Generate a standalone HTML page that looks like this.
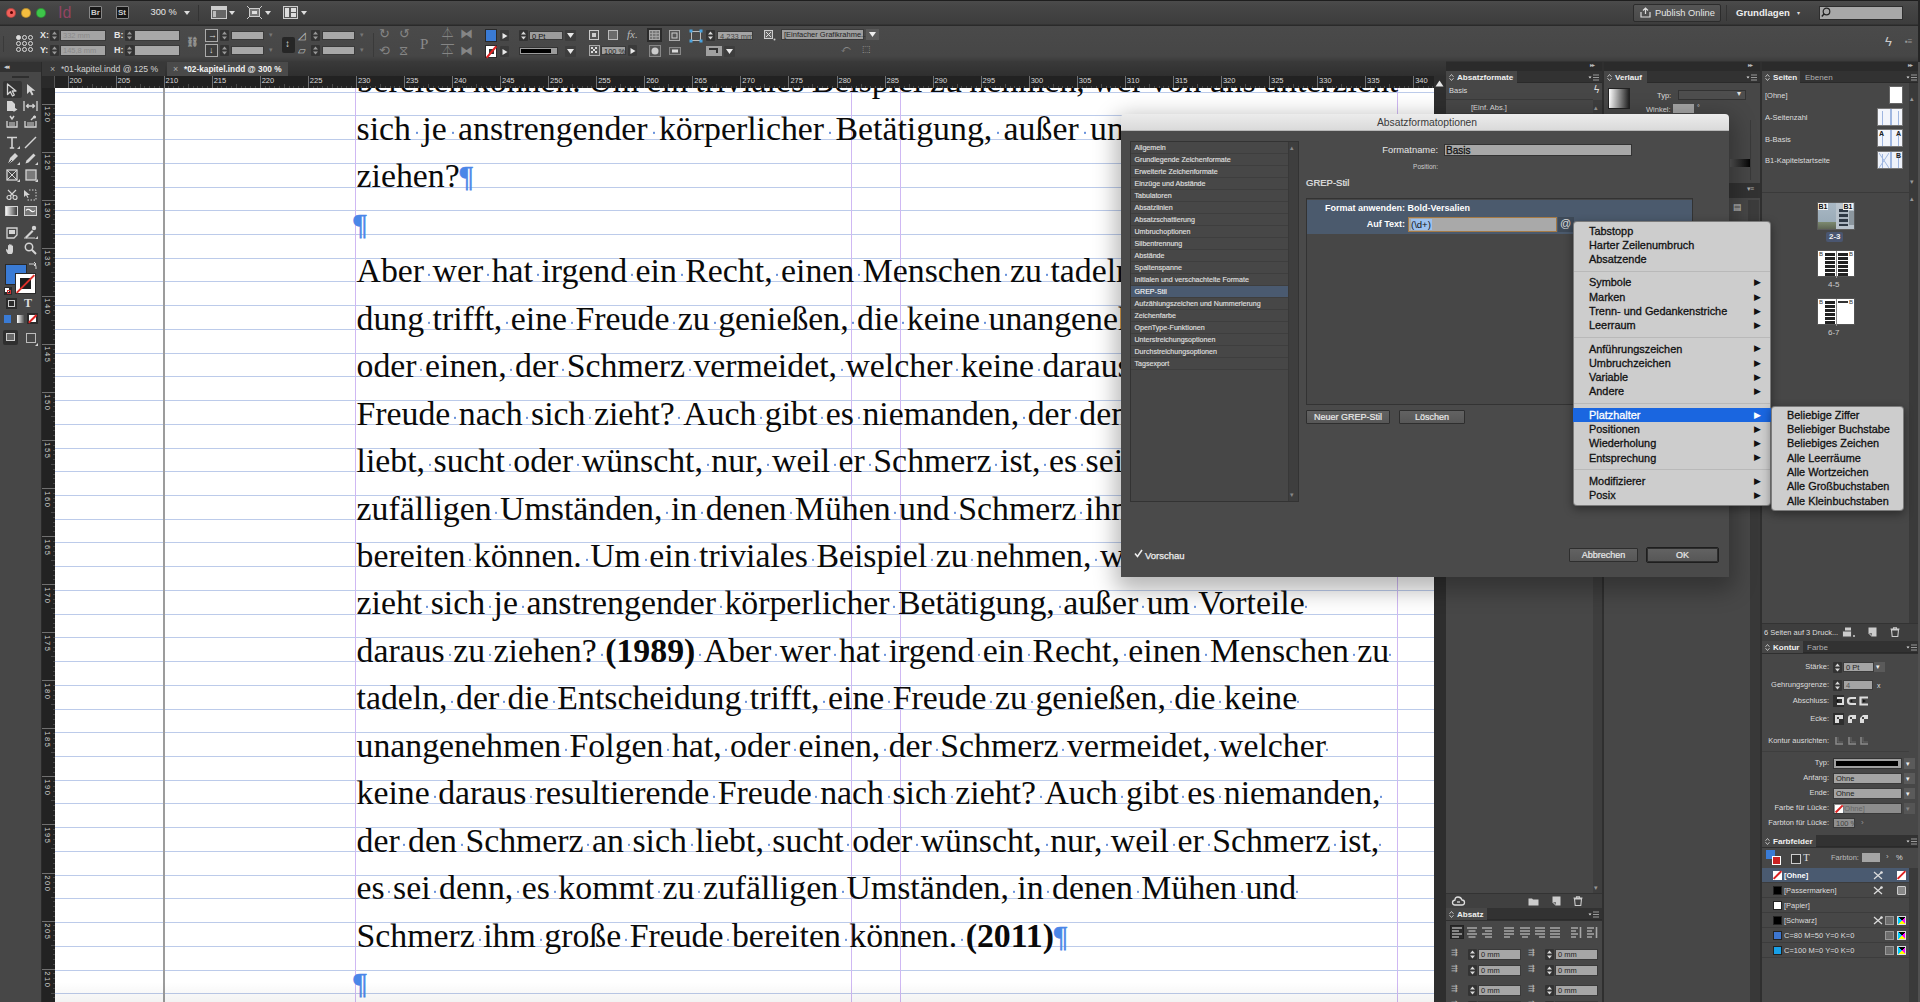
<!DOCTYPE html><html><head><meta charset="utf-8"><style>
*{margin:0;padding:0;box-sizing:border-box}
html,body{width:1920px;height:1002px;overflow:hidden;background:#474747;font-family:"Liberation Sans",sans-serif;color:#ddd;position:relative}
.a{position:absolute}
.t{position:absolute;white-space:nowrap;line-height:1}
i.sp{font-style:normal;position:relative}
.pil{color:#4a86e8;font-family:'Liberation Serif',serif;font-size:0.86em;-webkit-text-stroke:0.6px #4a86e8;position:relative;top:-0.02em}
i.sp:after{content:"";position:absolute;left:45%;top:0.66em;width:2px;height:2px;background:#6a93dc}
</style></head><body>
<div class="a" style="left:55px;top:88px;width:1379px;height:914px;background:#fff"></div><div class="a" style="left:55px;top:92px;width:1379px;height:1px;background:#bccbea"></div><div class="a" style="left:55px;top:115px;width:1379px;height:1px;background:#bccbea"></div><div class="a" style="left:55px;top:139px;width:1379px;height:1px;background:#bccbea"></div><div class="a" style="left:55px;top:163px;width:1379px;height:1px;background:#bccbea"></div><div class="a" style="left:55px;top:187px;width:1379px;height:1px;background:#bccbea"></div><div class="a" style="left:55px;top:210px;width:1379px;height:1px;background:#bccbea"></div><div class="a" style="left:55px;top:234px;width:1379px;height:1px;background:#bccbea"></div><div class="a" style="left:55px;top:258px;width:1379px;height:1px;background:#bccbea"></div><div class="a" style="left:55px;top:281px;width:1379px;height:1px;background:#bccbea"></div><div class="a" style="left:55px;top:305px;width:1379px;height:1px;background:#bccbea"></div><div class="a" style="left:55px;top:329px;width:1379px;height:1px;background:#bccbea"></div><div class="a" style="left:55px;top:353px;width:1379px;height:1px;background:#bccbea"></div><div class="a" style="left:55px;top:376px;width:1379px;height:1px;background:#bccbea"></div><div class="a" style="left:55px;top:400px;width:1379px;height:1px;background:#bccbea"></div><div class="a" style="left:55px;top:424px;width:1379px;height:1px;background:#bccbea"></div><div class="a" style="left:55px;top:448px;width:1379px;height:1px;background:#bccbea"></div><div class="a" style="left:55px;top:471px;width:1379px;height:1px;background:#bccbea"></div><div class="a" style="left:55px;top:495px;width:1379px;height:1px;background:#bccbea"></div><div class="a" style="left:55px;top:519px;width:1379px;height:1px;background:#bccbea"></div><div class="a" style="left:55px;top:542px;width:1379px;height:1px;background:#bccbea"></div><div class="a" style="left:55px;top:566px;width:1379px;height:1px;background:#bccbea"></div><div class="a" style="left:55px;top:590px;width:1379px;height:1px;background:#bccbea"></div><div class="a" style="left:55px;top:614px;width:1379px;height:1px;background:#bccbea"></div><div class="a" style="left:55px;top:637px;width:1379px;height:1px;background:#bccbea"></div><div class="a" style="left:55px;top:661px;width:1379px;height:1px;background:#bccbea"></div><div class="a" style="left:55px;top:685px;width:1379px;height:1px;background:#bccbea"></div><div class="a" style="left:55px;top:709px;width:1379px;height:1px;background:#bccbea"></div><div class="a" style="left:55px;top:732px;width:1379px;height:1px;background:#bccbea"></div><div class="a" style="left:55px;top:756px;width:1379px;height:1px;background:#bccbea"></div><div class="a" style="left:55px;top:780px;width:1379px;height:1px;background:#bccbea"></div><div class="a" style="left:55px;top:803px;width:1379px;height:1px;background:#bccbea"></div><div class="a" style="left:55px;top:827px;width:1379px;height:1px;background:#bccbea"></div><div class="a" style="left:55px;top:851px;width:1379px;height:1px;background:#bccbea"></div><div class="a" style="left:55px;top:875px;width:1379px;height:1px;background:#bccbea"></div><div class="a" style="left:55px;top:898px;width:1379px;height:1px;background:#bccbea"></div><div class="a" style="left:55px;top:922px;width:1379px;height:1px;background:#bccbea"></div><div class="a" style="left:55px;top:946px;width:1379px;height:1px;background:#bccbea"></div><div class="a" style="left:55px;top:970px;width:1379px;height:1px;background:#bccbea"></div><div class="a" style="left:55px;top:993px;width:1379px;height:1px;background:#bccbea"></div><div class="a" style="left:163.4px;top:88px;width:1.3px;height:914px;background:#9c9c9c"></div><div class="a" style="left:355.2px;top:88px;width:1.3px;height:914px;background:#cfb8f3"></div><div class="a" style="left:851.2px;top:88px;width:1.3px;height:914px;background:#cfb8f3"></div><div class="a" style="left:899.8px;top:88px;width:1.3px;height:914px;background:#cfb8f3"></div><div class="a" style="left:1396.7px;top:88px;width:1.3px;height:914px;background:#cfb8f3"></div><div class="t" style="left:356.5px;top:64.39px;font-family:'Liberation Serif', serif;font-size:33.8px;line-height:1;color:#0a0a0a;word-spacing:-0.95px;transform:scaleY(1.02);transform-origin:0 28.31px">bereiten<i class="sp"> </i>können.<i class="sp"> </i>Um<i class="sp"> </i>ein<i class="sp"> </i>triviales<i class="sp"> </i>Beispiel<i class="sp"> </i>zu<i class="sp"> </i>nehmen,<i class="sp"> </i>wer<i class="sp"> </i>von<i class="sp"> </i>uns<i class="sp"> </i>unterzieht<i class="sp"> </i></div><div class="t" style="left:356.5px;top:111.85px;font-family:'Liberation Serif', serif;font-size:33.8px;line-height:1;color:#0a0a0a;word-spacing:2.9px;transform:scaleY(1.02);transform-origin:0 28.31px">sich<i class="sp"> </i>je<i class="sp"> </i>anstrengender<i class="sp"> </i>körperlicher<i class="sp"> </i>Betätigung,<i class="sp"> </i>außer<i class="sp"> </i>um<i class="sp"> </i>Vorteile<i class="sp"> </i>daraus<i class="sp"> </i>zu<i class="sp"> </i></div><div class="t" style="left:356.5px;top:159.31px;font-family:'Liberation Serif', serif;font-size:33.8px;line-height:1;color:#0a0a0a;word-spacing:0px;transform:scaleY(1.02);transform-origin:0 28.31px">ziehen?<span class="pil">¶</span></div><div class="t" style="left:356.5px;top:206.77px;font-family:'Liberation Serif', serif;font-size:33.8px;line-height:1;color:#0a0a0a;word-spacing:0px;transform:scaleY(1.02);transform-origin:0 28.31px"><span class="pil" style="margin-left:-3px">¶</span></div><div class="t" style="left:356.5px;top:254.23px;font-family:'Liberation Serif', serif;font-size:33.8px;line-height:1;color:#0a0a0a;word-spacing:0px;transform:scaleY(1.02);transform-origin:0 28.31px">Aber<i class="sp"> </i>wer<i class="sp"> </i>hat<i class="sp"> </i>irgend<i class="sp"> </i>ein<i class="sp"> </i>Recht,<i class="sp"> </i>einen<i class="sp"> </i>Menschen<i class="sp"> </i>zu<i class="sp"> </i>tadeln,<i class="sp"> </i>der<i class="sp"> </i>die<i class="sp"> </i>Entschei-</div><div class="t" style="left:356.5px;top:301.69px;font-family:'Liberation Serif', serif;font-size:33.8px;line-height:1;color:#0a0a0a;word-spacing:0px;transform:scaleY(1.02);transform-origin:0 28.31px">dung<i class="sp"> </i>trifft,<i class="sp"> </i>eine<i class="sp"> </i>Freude<i class="sp"> </i>zu<i class="sp"> </i>genießen,<i class="sp"> </i>die<i class="sp"> </i>keine<i class="sp"> </i>unangenehmen<i class="sp"> </i>Folgen<i class="sp"> </i>hat,<i class="sp"> </i></div><div class="t" style="left:356.5px;top:349.15px;font-family:'Liberation Serif', serif;font-size:33.8px;line-height:1;color:#0a0a0a;word-spacing:0px;transform:scaleY(1.02);transform-origin:0 28.31px">oder<i class="sp"> </i>einen,<i class="sp"> </i>der<i class="sp"> </i>Schmerz<i class="sp"> </i>vermeidet,<i class="sp"> </i>welcher<i class="sp"> </i>keine<i class="sp"> </i>daraus<i class="sp"> </i>resultierende<i class="sp"> </i></div><div class="t" style="left:356.5px;top:396.61px;font-family:'Liberation Serif', serif;font-size:33.8px;line-height:1;color:#0a0a0a;word-spacing:0px;transform:scaleY(1.02);transform-origin:0 28.31px">Freude<i class="sp"> </i>nach<i class="sp"> </i>sich<i class="sp"> </i>zieht?<i class="sp"> </i>Auch<i class="sp"> </i>gibt<i class="sp"> </i>es<i class="sp"> </i>niemanden,<i class="sp"> </i>der<i class="sp"> </i>den<i class="sp"> </i>Schmerz<i class="sp"> </i>an<i class="sp"> </i>sich<i class="sp"> </i></div><div class="t" style="left:356.5px;top:444.07px;font-family:'Liberation Serif', serif;font-size:33.8px;line-height:1;color:#0a0a0a;word-spacing:0px;transform:scaleY(1.02);transform-origin:0 28.31px">liebt,<i class="sp"> </i>sucht<i class="sp"> </i>oder<i class="sp"> </i>wünscht,<i class="sp"> </i>nur,<i class="sp"> </i>weil<i class="sp"> </i>er<i class="sp"> </i>Schmerz<i class="sp"> </i>ist,<i class="sp"> </i>es<i class="sp"> </i>sei<i class="sp"> </i>denn,<i class="sp"> </i>es<i class="sp"> </i>kommt<i class="sp"> </i>zu<i class="sp"> </i></div><div class="t" style="left:356.5px;top:491.53px;font-family:'Liberation Serif', serif;font-size:33.8px;line-height:1;color:#0a0a0a;word-spacing:0px;transform:scaleY(1.02);transform-origin:0 28.31px">zufälligen<i class="sp"> </i>Umständen,<i class="sp"> </i>in<i class="sp"> </i>denen<i class="sp"> </i>Mühen<i class="sp"> </i>und<i class="sp"> </i>Schmerz<i class="sp"> </i>ihm<i class="sp"> </i>große<i class="sp"> </i>Freude<i class="sp"> </i></div><div class="t" style="left:356.5px;top:538.99px;font-family:'Liberation Serif', serif;font-size:33.8px;line-height:1;color:#0a0a0a;word-spacing:0px;transform:scaleY(1.02);transform-origin:0 28.31px">bereiten<i class="sp"> </i>können.<i class="sp"> </i>Um<i class="sp"> </i>ein<i class="sp"> </i>triviales<i class="sp"> </i>Beispiel<i class="sp"> </i>zu<i class="sp"> </i>nehmen,<i class="sp"> </i>wer<i class="sp"> </i>von<i class="sp"> </i>uns<i class="sp"> </i>unter-</div><div class="t" style="left:356.5px;top:586.45px;font-family:'Liberation Serif', serif;font-size:33.8px;line-height:1;color:#0a0a0a;word-spacing:0px;transform:scaleY(1.02);transform-origin:0 28.31px">zieht<i class="sp"> </i>sich<i class="sp"> </i>je<i class="sp"> </i>anstrengender<i class="sp"> </i>körperlicher<i class="sp"> </i>Betätigung,<i class="sp"> </i>außer<i class="sp"> </i>um<i class="sp"> </i>Vorteile<i class="sp"> </i></div><div class="t" style="left:356.5px;top:633.91px;font-family:'Liberation Serif', serif;font-size:33.8px;line-height:1;color:#0a0a0a;word-spacing:0px;transform:scaleY(1.02);transform-origin:0 28.31px">daraus<i class="sp"> </i>zu<i class="sp"> </i>ziehen?<i class="sp"> </i><b>(1989)</b><i class="sp"> </i>Aber<i class="sp"> </i>wer<i class="sp"> </i>hat<i class="sp"> </i>irgend<i class="sp"> </i>ein<i class="sp"> </i>Recht,<i class="sp"> </i>einen<i class="sp"> </i>Menschen<i class="sp"> </i>zu<i class="sp"> </i></div><div class="t" style="left:356.5px;top:681.37px;font-family:'Liberation Serif', serif;font-size:33.8px;line-height:1;color:#0a0a0a;word-spacing:0px;transform:scaleY(1.02);transform-origin:0 28.31px">tadeln,<i class="sp"> </i>der<i class="sp"> </i>die<i class="sp"> </i>Entscheidung<i class="sp"> </i>trifft,<i class="sp"> </i>eine<i class="sp"> </i>Freude<i class="sp"> </i>zu<i class="sp"> </i>genießen,<i class="sp"> </i>die<i class="sp"> </i>keine<i class="sp"> </i></div><div class="t" style="left:356.5px;top:728.83px;font-family:'Liberation Serif', serif;font-size:33.8px;line-height:1;color:#0a0a0a;word-spacing:0px;transform:scaleY(1.02);transform-origin:0 28.31px">unangenehmen<i class="sp"> </i>Folgen<i class="sp"> </i>hat,<i class="sp"> </i>oder<i class="sp"> </i>einen,<i class="sp"> </i>der<i class="sp"> </i>Schmerz<i class="sp"> </i>vermeidet,<i class="sp"> </i>welcher<i class="sp"> </i></div><div class="t" style="left:356.5px;top:776.29px;font-family:'Liberation Serif', serif;font-size:33.8px;line-height:1;color:#0a0a0a;word-spacing:0px;transform:scaleY(1.02);transform-origin:0 28.31px">keine<i class="sp"> </i>daraus<i class="sp"> </i>resultierende<i class="sp"> </i>Freude<i class="sp"> </i>nach<i class="sp"> </i>sich<i class="sp"> </i>zieht?<i class="sp"> </i>Auch<i class="sp"> </i>gibt<i class="sp"> </i>es<i class="sp"> </i>niemanden,<i class="sp"> </i></div><div class="t" style="left:356.5px;top:823.75px;font-family:'Liberation Serif', serif;font-size:33.8px;line-height:1;color:#0a0a0a;word-spacing:0px;transform:scaleY(1.02);transform-origin:0 28.31px">der<i class="sp"> </i>den<i class="sp"> </i>Schmerz<i class="sp"> </i>an<i class="sp"> </i>sich<i class="sp"> </i>liebt,<i class="sp"> </i>sucht<i class="sp"> </i>oder<i class="sp"> </i>wünscht,<i class="sp"> </i>nur,<i class="sp"> </i>weil<i class="sp"> </i>er<i class="sp"> </i>Schmerz<i class="sp"> </i>ist,<i class="sp"> </i></div><div class="t" style="left:356.5px;top:871.21px;font-family:'Liberation Serif', serif;font-size:33.8px;line-height:1;color:#0a0a0a;word-spacing:0px;transform:scaleY(1.02);transform-origin:0 28.31px">es<i class="sp"> </i>sei<i class="sp"> </i>denn,<i class="sp"> </i>es<i class="sp"> </i>kommt<i class="sp"> </i>zu<i class="sp"> </i>zufälligen<i class="sp"> </i>Umständen,<i class="sp"> </i>in<i class="sp"> </i>denen<i class="sp"> </i>Mühen<i class="sp"> </i>und<i class="sp"> </i></div><div class="t" style="left:356.5px;top:918.67px;font-family:'Liberation Serif', serif;font-size:33.8px;line-height:1;color:#0a0a0a;word-spacing:0px;transform:scaleY(1.02);transform-origin:0 28.31px">Schmerz<i class="sp"> </i>ihm<i class="sp"> </i>große<i class="sp"> </i>Freude<i class="sp"> </i>bereiten<i class="sp"> </i>können.<i class="sp"> </i><b>(2011)</b><span class="pil">¶</span></div><div class="t" style="left:356.5px;top:966.13px;font-family:'Liberation Serif', serif;font-size:33.8px;line-height:1;color:#0a0a0a;word-spacing:0px;transform:scaleY(1.02);transform-origin:0 28.31px"><span class="pil" style="margin-left:-3px">¶</span></div><div class="a" style="left:55px;top:982px;width:1379px;height:20px;background:linear-gradient(rgba(0,0,0,0),rgba(0,0,0,.05))"></div><div class="a" style="left:0px;top:0px;width:1920px;height:26px;background:linear-gradient(#1e1e1e 0,#1e1e1e 1px,#4b4b4b 1px,#464646 6px,#3d3d3d 24px,#2a2a2a 25px,#2a2a2a 26px)"></div><div class="a" style="left:6px;top:8px;width:10px;height:10px;border-radius:50%;background:#f2605a;border:1px solid rgba(0,0,0,.25)"></div><div class="a" style="left:21px;top:8px;width:10px;height:10px;border-radius:50%;background:#f4bd3f;border:1px solid rgba(0,0,0,.25)"></div><div class="a" style="left:36px;top:8px;width:10px;height:10px;border-radius:50%;background:#3ec64a;border:1px solid rgba(0,0,0,.25)"></div><div class="a" style="left:10px;top:11px;width:3px;height:3px;border-radius:50%;background:#5a0000"></div><div class="t" style="left:58px;top:4.5px;font-family:'Liberation Sans', sans-serif;font-size:16px;color:#a04568;opacity:.85">Id</div><div class="a" style="left:89px;top:6px;width:13px;height:13px;background:#161616;border:1px solid #888;border-radius:1px"><div class="t" style="left:1px;top:2px;font-size:8px;font-weight:bold;color:#ccc">Br</div></div><div class="a" style="left:116px;top:6px;width:13px;height:13px;background:#161616;border:1px solid #888;border-radius:1px"><div class="t" style="left:1px;top:2px;font-size:8px;font-weight:bold;color:#ccc">St</div></div><div class="t" style="left:150.5px;top:8px;font-size:9.3px;color:#e6e6e6">300 %</div><svg class="a" style="left:184px;top:11px;overflow:visible" width="6" height="4" viewBox="0 0 6 4"><path d="M0 0H6L3 4Z" fill="#ddd"/></svg><div class="a" style="left:198px;top:5px;width:1px;height:16px;background:#333"></div><svg class="a" style="left:211px;top:6px;overflow:visible" width="16" height="13" viewBox="0 0 16 13"><rect x="0.5" y="0.5" width="15" height="12" fill="#666" stroke="#ccc"/><rect x="1" y="1" width="14" height="3" fill="#ccc"/><rect x="2" y="5" width="3" height="6" fill="#bbb"/></svg><svg class="a" style="left:247px;top:6px;overflow:visible" width="15" height="13" viewBox="0 0 15 13"><rect x="2.5" y="2.5" width="10" height="8" fill="#777" stroke="#ccc"/><path d="M0 0L3 3M15 0L12 3M0 13L3 10M15 13L12 10" stroke="#ccc"/><rect x="5" y="5" width="5" height="3" fill="#ddd"/></svg><svg class="a" style="left:283px;top:6px;overflow:visible" width="15" height="13" viewBox="0 0 15 13"><rect x="0.5" y="0.5" width="14" height="12" fill="#555" stroke="#ccc"/><rect x="2" y="2" width="4" height="9" fill="#ddd"/><rect x="8" y="2" width="5" height="4" fill="#ddd"/><rect x="8" y="7" width="5" height="4" fill="#ddd"/></svg><svg class="a" style="left:229px;top:11px;overflow:visible" width="6" height="4" viewBox="0 0 6 4"><path d="M0 0H6L3 4Z" fill="#ddd"/></svg><svg class="a" style="left:265px;top:11px;overflow:visible" width="6" height="4" viewBox="0 0 6 4"><path d="M0 0H6L3 4Z" fill="#ddd"/></svg><svg class="a" style="left:301px;top:11px;overflow:visible" width="6" height="4" viewBox="0 0 6 4"><path d="M0 0H6L3 4Z" fill="#ddd"/></svg><div class="a" style="left:1633px;top:4px;width:88px;height:18px;border:1px solid #2c2c2c;background:linear-gradient(#555,#4a4a4a);border-radius:2px"></div><svg class="a" style="left:1640px;top:7px;overflow:visible" width="11" height="11" viewBox="0 0 11 11"><path d="M1 5V10H10V5M5.5 1V7M3 3.5L5.5 1L8 3.5" fill="none" stroke="#ddd" stroke-width="1.2"/></svg><div class="t" style="left:1655px;top:8.5px;font-size:9.3px;color:#e6e6e6">Publish Online</div><div class="a" style="left:1726px;top:5px;width:1px;height:16px;background:#333"></div><div class="t" style="left:1736px;top:8px;font-size:9.6px;color:#eee;font-weight:bold">Grundlagen</div><div class="t" style="left:1797px;top:10px;font-size:6px;color:#ddd">▾</div><div class="a" style="left:1819px;top:6px;width:84px;height:14px;background:#a8a8a8;border:1px solid #2e2e2e"></div><svg class="a" style="left:1821px;top:7px;overflow:visible" width="10" height="11" viewBox="0 0 10 11"><circle cx="5.5" cy="4.5" r="3.3" fill="none" stroke="#222" stroke-width="1.2"/><path d="M3.2 6.8L0.8 9.5" stroke="#222" stroke-width="1.4"/></svg><div class="a" style="left:0px;top:26px;width:1920px;height:36px;background:linear-gradient(#4a4a4a,#464646 30px,#3c3c3c 35px,#2a2a2a 36px)"></div><div class="a" style="left:3px;top:36px;width:1px;height:16px;background:#3a3a3a"></div><div class="a" style="left:16px;top:35px;width:5px;height:5px;border:1px solid #ddd;border-radius:50%;background:#ddd"></div><div class="a" style="left:22px;top:35px;width:5px;height:5px;border:1px solid #ddd;border-radius:50%"></div><div class="a" style="left:28px;top:35px;width:5px;height:5px;border:1px solid #ddd;border-radius:50%"></div><div class="a" style="left:16px;top:41px;width:5px;height:5px;border:1px solid #ddd;border-radius:50%"></div><div class="a" style="left:22px;top:41px;width:5px;height:5px;border:1px solid #ddd;border-radius:50%"></div><div class="a" style="left:28px;top:41px;width:5px;height:5px;border:1px solid #ddd;border-radius:50%"></div><div class="a" style="left:16px;top:47px;width:5px;height:5px;border:1px solid #ddd;border-radius:50%"></div><div class="a" style="left:22px;top:47px;width:5px;height:5px;border:1px solid #ddd;border-radius:50%"></div><div class="a" style="left:28px;top:47px;width:5px;height:5px;border:1px solid #ddd;border-radius:50%"></div><div class="t" style="left:40px;top:31px;font-size:9px;color:#e6e6e6;font-weight:bold">X:</div><div class="t" style="left:40px;top:46px;font-size:9px;color:#e6e6e6;font-weight:bold">Y:</div><div class="t" style="left:114px;top:31px;font-size:9px;color:#e6e6e6;font-weight:bold">B:</div><div class="t" style="left:114px;top:46px;font-size:9px;color:#e6e6e6;font-weight:bold">H:</div><div class="a" style="left:50px;top:30px;width:9px;height:11px;background:#333;border-radius:1px"><svg class="a" style="left:1px;top:1px" width="7" height="9"><path d="M1 3.5L3.5 0.5L6 3.5ZM1 5.5L3.5 8.5L6 5.5Z" fill="#999"/></svg></div><div class="a" style="left:60px;top:30px;width:46px;height:11px;background:#a4a4a4;border:1px solid #3a3a3a"><div class="t" style="left:2px;top:1px;font-size:7.5px;color:#8a8a8a">332 mm</div></div><div class="a" style="left:50px;top:45px;width:9px;height:11px;background:#333;border-radius:1px"><svg class="a" style="left:1px;top:1px" width="7" height="9"><path d="M1 3.5L3.5 0.5L6 3.5ZM1 5.5L3.5 8.5L6 5.5Z" fill="#999"/></svg></div><div class="a" style="left:60px;top:45px;width:46px;height:11px;background:#a4a4a4;border:1px solid #3a3a3a"><div class="t" style="left:2px;top:1px;font-size:7.5px;color:#8a8a8a">145,8 mm</div></div><div class="a" style="left:125px;top:30px;width:9px;height:11px;background:#333;border-radius:1px"><svg class="a" style="left:1px;top:1px" width="7" height="9"><path d="M1 3.5L3.5 0.5L6 3.5ZM1 5.5L3.5 8.5L6 5.5Z" fill="#999"/></svg></div><div class="a" style="left:134px;top:30px;width:46px;height:11px;background:#a8a8a8;border:1px solid #3a3a3a"></div><div class="a" style="left:125px;top:45px;width:9px;height:11px;background:#333;border-radius:1px"><svg class="a" style="left:1px;top:1px" width="7" height="9"><path d="M1 3.5L3.5 0.5L6 3.5ZM1 5.5L3.5 8.5L6 5.5Z" fill="#999"/></svg></div><div class="a" style="left:134px;top:45px;width:46px;height:11px;background:#a8a8a8;border:1px solid #3a3a3a"></div><div class="t" style="left:186px;top:37px;font-size:10px;color:#ccc">⛓</div><div class="a" style="left:205px;top:29px;width:13px;height:13px;border:1px solid #aaa;background:#3d3d3d"><div class="t" style="left:2px;top:1px;font-size:9px;color:#ddd">→</div></div><div class="a" style="left:205px;top:44px;width:13px;height:13px;border:1px solid #aaa;background:#3d3d3d"><div class="t" style="left:3px;top:1px;font-size:9px;color:#ddd">↓</div></div><div class="a" style="left:220px;top:30px;width:9px;height:11px;background:#333;border-radius:1px"><svg class="a" style="left:1px;top:1px" width="7" height="9"><path d="M1 3.5L3.5 0.5L6 3.5ZM1 5.5L3.5 8.5L6 5.5Z" fill="#999"/></svg></div><div class="a" style="left:231px;top:31px;width:33px;height:9px;background:#a8a8a8;border:1px solid #3a3a3a"></div><div class="t" style="left:269px;top:31px;font-size:7px;color:#777">▾</div><div class="a" style="left:220px;top:45px;width:9px;height:11px;background:#333;border-radius:1px"><svg class="a" style="left:1px;top:1px" width="7" height="9"><path d="M1 3.5L3.5 0.5L6 3.5ZM1 5.5L3.5 8.5L6 5.5Z" fill="#999"/></svg></div><div class="a" style="left:231px;top:46px;width:33px;height:9px;background:#a8a8a8;border:1px solid #3a3a3a"></div><div class="t" style="left:269px;top:46px;font-size:7px;color:#777">▾</div><div class="a" style="left:282px;top:37px;width:13px;height:16px;background:#262626;border-radius:2px"><div class="t" style="left:3px;top:2px;font-size:10px;color:#ddd">↕</div></div><div class="t" style="left:298px;top:31px;font-size:10px;color:#ccc">◿</div><div class="t" style="left:298px;top:46px;font-size:10px;color:#ccc">▱</div><div class="a" style="left:311px;top:30px;width:9px;height:11px;background:#333;border-radius:1px"><svg class="a" style="left:1px;top:1px" width="7" height="9"><path d="M1 3.5L3.5 0.5L6 3.5ZM1 5.5L3.5 8.5L6 5.5Z" fill="#999"/></svg></div><div class="a" style="left:322px;top:31px;width:33px;height:9px;background:#a8a8a8;border:1px solid #3a3a3a"></div><div class="t" style="left:360px;top:31px;font-size:7px;color:#777">▾</div><div class="a" style="left:311px;top:45px;width:9px;height:11px;background:#333;border-radius:1px"><svg class="a" style="left:1px;top:1px" width="7" height="9"><path d="M1 3.5L3.5 0.5L6 3.5ZM1 5.5L3.5 8.5L6 5.5Z" fill="#999"/></svg></div><div class="a" style="left:322px;top:46px;width:33px;height:9px;background:#a8a8a8;border:1px solid #3a3a3a"></div><div class="t" style="left:360px;top:46px;font-size:7px;color:#777">▾</div><div class="a" style="left:373px;top:33px;width:1px;height:24px;background:#3a3a3a"></div><div class="t" style="left:379px;top:27px;font-size:13px;color:#858585">↻</div><div class="t" style="left:399px;top:27px;font-size:13px;color:#858585">↺</div><div class="t" style="left:379px;top:44px;font-size:13px;color:#858585">⟲</div><div class="t" style="left:399px;top:44px;font-size:13px;color:#858585">⧖</div><div class="t" style="left:441px;top:27px;font-size:13px;color:#858585">⏃</div><div class="t" style="left:460px;top:27px;font-size:13px;color:#858585">⧓</div><div class="t" style="left:441px;top:44px;font-size:13px;color:#858585">⏄</div><div class="t" style="left:460px;top:44px;font-size:13px;color:#858585">⧓</div><div class="t" style="left:420px;top:37px;font-size:15px;color:#8a8a8a;font-family:'Liberation Serif', serif">P</div><div class="a" style="left:485px;top:29px;width:12px;height:13px;background:#3a7bd5;border:1px solid #2a2a2a"></div><div class="a" style="left:485px;top:45px;width:12px;height:13px;background:#fff;border:1px solid #2a2a2a"><div class="a" style="left:3px;top:3px;width:5px;height:5px;background:#333"></div><div class="a" style="left:-2px;top:5px;width:15px;height:2px;background:#d22;transform:rotate(-50deg)"></div></div><div class="a" style="left:500px;top:30px;width:9px;height:11px;background:#3a3a3a;border-radius:1px"><svg class="a" style="left:2px;top:2.5px" width="6" height="6"><path d="M0.5 0L5.5 3L0.5 6Z" fill="#e8e8e8"/></svg></div><div class="a" style="left:500px;top:46px;width:9px;height:11px;background:#3a3a3a;border-radius:1px"><svg class="a" style="left:2px;top:2.5px" width="6" height="6"><path d="M0.5 0L5.5 3L0.5 6Z" fill="#e8e8e8"/></svg></div><div class="a" style="left:519px;top:30px;width:9px;height:11px;background:#333;border-radius:1px"><svg class="a" style="left:1px;top:1px" width="7" height="9"><path d="M1 3.5L3.5 0.5L6 3.5ZM1 5.5L3.5 8.5L6 5.5Z" fill="#d8d8d8"/></svg></div><div class="a" style="left:529px;top:31px;width:34px;height:9px;background:#9c9c9c;border:1px solid #3a3a3a"><div class="t" style="left:2px;top:1px;font-size:7.5px;color:#111">0 Pt</div></div><div class="a" style="left:565px;top:30px;width:11px;height:11px;background:#3d3d3d;border-radius:1px"><svg class="a" style="left:2px;top:3px" width="7" height="5"><path d="M0 0H7L3.5 5Z" fill="#e8e8e8"/></svg></div><div class="a" style="left:519px;top:47px;width:39px;height:8px;background:#9c9c9c;border:1px solid #333"><div class="a" style="left:1px;top:1px;width:30px;height:4px;background:#000"></div></div><div class="a" style="left:565px;top:46px;width:11px;height:11px;background:#3d3d3d;border-radius:1px"><svg class="a" style="left:2px;top:3px" width="7" height="5"><path d="M0 0H7L3.5 5Z" fill="#e8e8e8"/></svg></div><svg class="a" style="left:589px;top:30px;overflow:visible" width="11" height="11" viewBox="0 0 11 11"><rect x="0.5" y="0.5" width="9" height="9" fill="#555" stroke="#ccc"/><rect x="3" y="3" width="4" height="4" fill="#ccc"/></svg><svg class="a" style="left:608px;top:30px;overflow:visible" width="11" height="11" viewBox="0 0 11 11"><rect x="0.5" y="0.5" width="9" height="9" fill="#6a6a6a" stroke="#bbb"/></svg><div class="t" style="left:627px;top:29px;font-size:11px;color:#bbb;font-style:italic;font-family:'Liberation Serif', serif">fx.</div><div class="a" style="left:647px;top:28px;width:15px;height:14px;background:#2b2b2b"><svg class="a" style="left:2px;top:2px" width="11" height="10"><rect x="0.5" y="0.5" width="10" height="9" fill="#777" stroke="#aaa"/><path d="M0 3.5H11M0 6.5H11M3.5 0V10M7 0V10" stroke="#aaa" stroke-width="0.8"/></svg></div><svg class="a" style="left:669px;top:30px;overflow:visible" width="11" height="11" viewBox="0 0 11 11"><rect x="0.5" y="0.5" width="10" height="10" fill="#555" stroke="#aaa"/><rect x="3" y="3" width="5" height="5" fill="none" stroke="#ccc"/></svg><svg class="a" style="left:589px;top:45px;overflow:visible" width="11" height="11" viewBox="0 0 11 11"><rect x="0.5" y="0.5" width="10" height="10" fill="#555" stroke="#aaa"/><path d="M2 2H4V4H2ZM6 2H8V4H6ZM4 4H6V6H4ZM2 6H4V8H2ZM6 6H8V8H6Z" fill="#ddd"/></svg><div class="a" style="left:601px;top:46px;width:25px;height:9px;background:#a0a0a0;border:1px solid #3a3a3a"><div class="t" style="left:2px;top:1px;font-size:7.5px;color:#222">100 %</div></div><div class="a" style="left:628px;top:45px;width:9px;height:11px;background:#3a3a3a;border-radius:1px"><svg class="a" style="left:2px;top:2.5px" width="6" height="6"><path d="M0.5 0L5.5 3L0.5 6Z" fill="#e8e8e8"/></svg></div><svg class="a" style="left:649px;top:45px;overflow:visible" width="12" height="12" viewBox="0 0 12 12"><rect x="0.5" y="0.5" width="11" height="11" fill="#555" stroke="#888"/><circle cx="6" cy="6" r="3.5" fill="#ccc"/></svg><svg class="a" style="left:669px;top:45px;overflow:visible" width="12" height="12" viewBox="0 0 12 12"><rect x="0.5" y="2.5" width="11" height="7" fill="#555" stroke="#888"/><rect x="3" y="4.5" width="6" height="3" fill="#ddd"/></svg><svg class="a" style="left:689px;top:29px;overflow:visible" width="14" height="14" viewBox="0 0 14 14"><rect x="2.5" y="2.5" width="9" height="9" fill="none" stroke="#bbb"/><rect x="0.5" y="0.5" width="3" height="3" fill="#4aa3df"/><rect x="10.5" y="0.5" width="3" height="3" fill="#4aa3df"/><rect x="0.5" y="10.5" width="3" height="3" fill="#4aa3df"/><rect x="10.5" y="10.5" width="3" height="3" fill="#4aa3df"/></svg><div class="a" style="left:706px;top:30px;width:9px;height:11px;background:#333;border-radius:1px"><svg class="a" style="left:1px;top:1px" width="7" height="9"><path d="M1 3.5L3.5 0.5L6 3.5ZM1 5.5L3.5 8.5L6 5.5Z" fill="#d8d8d8"/></svg></div><div class="a" style="left:717px;top:31px;width:36px;height:9px;background:#a4a4a4;border:1px solid #3a3a3a"><div class="t" style="left:2px;top:1px;font-size:7.5px;color:#444">4,233 mm</div></div><div class="a" style="left:706px;top:46px;width:16px;height:10px;background:#a0a0a0"><div class="a" style="left:3px;top:2px;width:9px;height:5px;border-top:2px solid #333;border-right:2px solid #333"></div></div><div class="a" style="left:724px;top:46px;width:11px;height:11px;background:#3d3d3d;border-radius:1px"><svg class="a" style="left:2px;top:3px" width="7" height="5"><path d="M0 0H7L3.5 5Z" fill="#e8e8e8"/></svg></div><svg class="a" style="left:763px;top:29px;overflow:visible" width="13" height="12" viewBox="0 0 13 12"><rect x="1.5" y="1.5" width="8" height="8" fill="#666" stroke="#ccc"/><path d="M3 3L8 8M8 3L3 8" stroke="#ddd"/><circle cx="11.5" cy="10.5" r="1" fill="#ccc"/></svg><div class="a" style="left:781px;top:29px;width:83px;height:11px;background:#9e9e9e;border:1px solid #3a3a3a"><div class="t" style="left:2px;top:1px;font-size:7.5px;color:#222">[Einfacher Grafikrahme...</div></div><div class="a" style="left:866px;top:29px;width:13px;height:11px;background:#5a5a5a"><svg class="a" style="left:3px;top:3px" width="7" height="5"><path d="M0 0H7L3.5 5Z" fill="#eee"/></svg></div><div class="t" style="left:841px;top:45px;font-size:9px;color:#888">⤺</div><div class="t" style="left:862px;top:45px;font-size:9px;color:#aaa">⬚</div><div class="t" style="left:1885px;top:35px;font-size:13px;color:#ccc">ϟ</div><div class="t" style="left:1905px;top:38px;font-size:8px;color:#999">▪≡</div><div class="a" style="left:0px;top:61px;width:1446px;height:15px;background:linear-gradient(#3a3a3a,#2f2f2f)"></div><div class="a" style="left:0px;top:62px;width:42px;height:10px;background:#323232"></div><div class="t" style="left:4px;top:63px;font-size:7px;color:#ccc;letter-spacing:-2px">◂◂</div><div class="a" style="left:42px;top:62px;width:123px;height:14px;background:#383838"></div><div class="t" style="left:50px;top:65px;font-size:9px;color:#aaa">×</div><div class="t" style="left:61px;top:65px;font-size:8.6px;color:#d2d2d2">*01-kapitel.indd @ 125 %</div><div class="a" style="left:167px;top:62px;width:121px;height:14px;background:#4a4a4a"></div><div class="t" style="left:173px;top:65px;font-size:9px;color:#aaa">×</div><div class="t" style="left:184px;top:65px;font-size:8.3px;color:#f2f2f2;font-weight:bold">*02-kapitel.indd @ 300 %</div><div class="a" style="left:42px;top:76px;width:1392px;height:12px;background:#222"></div><div class="a" style="left:42px;top:76px;width:13px;height:12px;background:#2a2a2a;border-right:1px solid #555"></div><div class="a" style="left:67.5px;top:76px;width:1px;height:12px;background:#707070"></div><div class="a" style="left:72.3px;top:86px;width:1px;height:2px;background:#4a4a4a"></div><div class="a" style="left:77.1px;top:86px;width:1px;height:2px;background:#4a4a4a"></div><div class="a" style="left:81.9px;top:86px;width:1px;height:2px;background:#4a4a4a"></div><div class="a" style="left:86.7px;top:86px;width:1px;height:2px;background:#4a4a4a"></div><div class="a" style="left:91.5px;top:84px;width:1px;height:4px;background:#4a4a4a"></div><div class="a" style="left:96.3px;top:86px;width:1px;height:2px;background:#4a4a4a"></div><div class="a" style="left:101.1px;top:86px;width:1px;height:2px;background:#4a4a4a"></div><div class="a" style="left:105.9px;top:86px;width:1px;height:2px;background:#4a4a4a"></div><div class="a" style="left:110.8px;top:86px;width:1px;height:2px;background:#4a4a4a"></div><div class="t" style="left:69.5px;top:77px;font-size:7.5px;color:#d8d8d8">200</div><div class="a" style="left:115.6px;top:76px;width:1px;height:12px;background:#707070"></div><div class="a" style="left:120.4px;top:86px;width:1px;height:2px;background:#4a4a4a"></div><div class="a" style="left:125.2px;top:86px;width:1px;height:2px;background:#4a4a4a"></div><div class="a" style="left:130.0px;top:86px;width:1px;height:2px;background:#4a4a4a"></div><div class="a" style="left:134.8px;top:86px;width:1px;height:2px;background:#4a4a4a"></div><div class="a" style="left:139.6px;top:84px;width:1px;height:4px;background:#4a4a4a"></div><div class="a" style="left:144.4px;top:86px;width:1px;height:2px;background:#4a4a4a"></div><div class="a" style="left:149.2px;top:86px;width:1px;height:2px;background:#4a4a4a"></div><div class="a" style="left:154.0px;top:86px;width:1px;height:2px;background:#4a4a4a"></div><div class="a" style="left:158.8px;top:86px;width:1px;height:2px;background:#4a4a4a"></div><div class="t" style="left:117.6px;top:77px;font-size:7.5px;color:#d8d8d8">205</div><div class="a" style="left:163.6px;top:76px;width:1px;height:12px;background:#707070"></div><div class="a" style="left:168.4px;top:86px;width:1px;height:2px;background:#4a4a4a"></div><div class="a" style="left:173.2px;top:86px;width:1px;height:2px;background:#4a4a4a"></div><div class="a" style="left:178.0px;top:86px;width:1px;height:2px;background:#4a4a4a"></div><div class="a" style="left:182.8px;top:86px;width:1px;height:2px;background:#4a4a4a"></div><div class="a" style="left:187.7px;top:84px;width:1px;height:4px;background:#4a4a4a"></div><div class="a" style="left:192.5px;top:86px;width:1px;height:2px;background:#4a4a4a"></div><div class="a" style="left:197.3px;top:86px;width:1px;height:2px;background:#4a4a4a"></div><div class="a" style="left:202.1px;top:86px;width:1px;height:2px;background:#4a4a4a"></div><div class="a" style="left:206.9px;top:86px;width:1px;height:2px;background:#4a4a4a"></div><div class="t" style="left:165.6px;top:77px;font-size:7.5px;color:#d8d8d8">210</div><div class="a" style="left:211.7px;top:76px;width:1px;height:12px;background:#707070"></div><div class="a" style="left:216.5px;top:86px;width:1px;height:2px;background:#4a4a4a"></div><div class="a" style="left:221.3px;top:86px;width:1px;height:2px;background:#4a4a4a"></div><div class="a" style="left:226.1px;top:86px;width:1px;height:2px;background:#4a4a4a"></div><div class="a" style="left:230.9px;top:86px;width:1px;height:2px;background:#4a4a4a"></div><div class="a" style="left:235.7px;top:84px;width:1px;height:4px;background:#4a4a4a"></div><div class="a" style="left:240.5px;top:86px;width:1px;height:2px;background:#4a4a4a"></div><div class="a" style="left:245.3px;top:86px;width:1px;height:2px;background:#4a4a4a"></div><div class="a" style="left:250.1px;top:86px;width:1px;height:2px;background:#4a4a4a"></div><div class="a" style="left:254.9px;top:86px;width:1px;height:2px;background:#4a4a4a"></div><div class="t" style="left:213.7px;top:77px;font-size:7.5px;color:#d8d8d8">215</div><div class="a" style="left:259.7px;top:76px;width:1px;height:12px;background:#707070"></div><div class="a" style="left:264.5px;top:86px;width:1px;height:2px;background:#4a4a4a"></div><div class="a" style="left:269.4px;top:86px;width:1px;height:2px;background:#4a4a4a"></div><div class="a" style="left:274.2px;top:86px;width:1px;height:2px;background:#4a4a4a"></div><div class="a" style="left:279.0px;top:86px;width:1px;height:2px;background:#4a4a4a"></div><div class="a" style="left:283.8px;top:84px;width:1px;height:4px;background:#4a4a4a"></div><div class="a" style="left:288.6px;top:86px;width:1px;height:2px;background:#4a4a4a"></div><div class="a" style="left:293.4px;top:86px;width:1px;height:2px;background:#4a4a4a"></div><div class="a" style="left:298.2px;top:86px;width:1px;height:2px;background:#4a4a4a"></div><div class="a" style="left:303.0px;top:86px;width:1px;height:2px;background:#4a4a4a"></div><div class="t" style="left:261.7px;top:77px;font-size:7.5px;color:#d8d8d8">220</div><div class="a" style="left:307.8px;top:76px;width:1px;height:12px;background:#707070"></div><div class="a" style="left:312.6px;top:86px;width:1px;height:2px;background:#4a4a4a"></div><div class="a" style="left:317.4px;top:86px;width:1px;height:2px;background:#4a4a4a"></div><div class="a" style="left:322.2px;top:86px;width:1px;height:2px;background:#4a4a4a"></div><div class="a" style="left:327.0px;top:86px;width:1px;height:2px;background:#4a4a4a"></div><div class="a" style="left:331.8px;top:84px;width:1px;height:4px;background:#4a4a4a"></div><div class="a" style="left:336.6px;top:86px;width:1px;height:2px;background:#4a4a4a"></div><div class="a" style="left:341.4px;top:86px;width:1px;height:2px;background:#4a4a4a"></div><div class="a" style="left:346.2px;top:86px;width:1px;height:2px;background:#4a4a4a"></div><div class="a" style="left:351.1px;top:86px;width:1px;height:2px;background:#4a4a4a"></div><div class="t" style="left:309.8px;top:77px;font-size:7.5px;color:#d8d8d8">225</div><div class="a" style="left:355.9px;top:76px;width:1px;height:12px;background:#707070"></div><div class="a" style="left:360.7px;top:86px;width:1px;height:2px;background:#4a4a4a"></div><div class="a" style="left:365.5px;top:86px;width:1px;height:2px;background:#4a4a4a"></div><div class="a" style="left:370.3px;top:86px;width:1px;height:2px;background:#4a4a4a"></div><div class="a" style="left:375.1px;top:86px;width:1px;height:2px;background:#4a4a4a"></div><div class="a" style="left:379.9px;top:84px;width:1px;height:4px;background:#4a4a4a"></div><div class="a" style="left:384.7px;top:86px;width:1px;height:2px;background:#4a4a4a"></div><div class="a" style="left:389.5px;top:86px;width:1px;height:2px;background:#4a4a4a"></div><div class="a" style="left:394.3px;top:86px;width:1px;height:2px;background:#4a4a4a"></div><div class="a" style="left:399.1px;top:86px;width:1px;height:2px;background:#4a4a4a"></div><div class="t" style="left:357.9px;top:77px;font-size:7.5px;color:#d8d8d8">230</div><div class="a" style="left:403.9px;top:76px;width:1px;height:12px;background:#707070"></div><div class="a" style="left:408.7px;top:86px;width:1px;height:2px;background:#4a4a4a"></div><div class="a" style="left:413.5px;top:86px;width:1px;height:2px;background:#4a4a4a"></div><div class="a" style="left:418.3px;top:86px;width:1px;height:2px;background:#4a4a4a"></div><div class="a" style="left:423.1px;top:86px;width:1px;height:2px;background:#4a4a4a"></div><div class="a" style="left:428.0px;top:84px;width:1px;height:4px;background:#4a4a4a"></div><div class="a" style="left:432.8px;top:86px;width:1px;height:2px;background:#4a4a4a"></div><div class="a" style="left:437.6px;top:86px;width:1px;height:2px;background:#4a4a4a"></div><div class="a" style="left:442.4px;top:86px;width:1px;height:2px;background:#4a4a4a"></div><div class="a" style="left:447.2px;top:86px;width:1px;height:2px;background:#4a4a4a"></div><div class="t" style="left:405.9px;top:77px;font-size:7.5px;color:#d8d8d8">235</div><div class="a" style="left:452.0px;top:76px;width:1px;height:12px;background:#707070"></div><div class="a" style="left:456.8px;top:86px;width:1px;height:2px;background:#4a4a4a"></div><div class="a" style="left:461.6px;top:86px;width:1px;height:2px;background:#4a4a4a"></div><div class="a" style="left:466.4px;top:86px;width:1px;height:2px;background:#4a4a4a"></div><div class="a" style="left:471.2px;top:86px;width:1px;height:2px;background:#4a4a4a"></div><div class="a" style="left:476.0px;top:84px;width:1px;height:4px;background:#4a4a4a"></div><div class="a" style="left:480.8px;top:86px;width:1px;height:2px;background:#4a4a4a"></div><div class="a" style="left:485.6px;top:86px;width:1px;height:2px;background:#4a4a4a"></div><div class="a" style="left:490.4px;top:86px;width:1px;height:2px;background:#4a4a4a"></div><div class="a" style="left:495.2px;top:86px;width:1px;height:2px;background:#4a4a4a"></div><div class="t" style="left:454.0px;top:77px;font-size:7.5px;color:#d8d8d8">240</div><div class="a" style="left:500.0px;top:76px;width:1px;height:12px;background:#707070"></div><div class="a" style="left:504.8px;top:86px;width:1px;height:2px;background:#4a4a4a"></div><div class="a" style="left:509.7px;top:86px;width:1px;height:2px;background:#4a4a4a"></div><div class="a" style="left:514.5px;top:86px;width:1px;height:2px;background:#4a4a4a"></div><div class="a" style="left:519.3px;top:86px;width:1px;height:2px;background:#4a4a4a"></div><div class="a" style="left:524.1px;top:84px;width:1px;height:4px;background:#4a4a4a"></div><div class="a" style="left:528.9px;top:86px;width:1px;height:2px;background:#4a4a4a"></div><div class="a" style="left:533.7px;top:86px;width:1px;height:2px;background:#4a4a4a"></div><div class="a" style="left:538.5px;top:86px;width:1px;height:2px;background:#4a4a4a"></div><div class="a" style="left:543.3px;top:86px;width:1px;height:2px;background:#4a4a4a"></div><div class="t" style="left:502.0px;top:77px;font-size:7.5px;color:#d8d8d8">245</div><div class="a" style="left:548.1px;top:76px;width:1px;height:12px;background:#707070"></div><div class="a" style="left:552.9px;top:86px;width:1px;height:2px;background:#4a4a4a"></div><div class="a" style="left:557.7px;top:86px;width:1px;height:2px;background:#4a4a4a"></div><div class="a" style="left:562.5px;top:86px;width:1px;height:2px;background:#4a4a4a"></div><div class="a" style="left:567.3px;top:86px;width:1px;height:2px;background:#4a4a4a"></div><div class="a" style="left:572.1px;top:84px;width:1px;height:4px;background:#4a4a4a"></div><div class="a" style="left:576.9px;top:86px;width:1px;height:2px;background:#4a4a4a"></div><div class="a" style="left:581.7px;top:86px;width:1px;height:2px;background:#4a4a4a"></div><div class="a" style="left:586.5px;top:86px;width:1px;height:2px;background:#4a4a4a"></div><div class="a" style="left:591.4px;top:86px;width:1px;height:2px;background:#4a4a4a"></div><div class="t" style="left:550.1px;top:77px;font-size:7.5px;color:#d8d8d8">250</div><div class="a" style="left:596.2px;top:76px;width:1px;height:12px;background:#707070"></div><div class="a" style="left:601.0px;top:86px;width:1px;height:2px;background:#4a4a4a"></div><div class="a" style="left:605.8px;top:86px;width:1px;height:2px;background:#4a4a4a"></div><div class="a" style="left:610.6px;top:86px;width:1px;height:2px;background:#4a4a4a"></div><div class="a" style="left:615.4px;top:86px;width:1px;height:2px;background:#4a4a4a"></div><div class="a" style="left:620.2px;top:84px;width:1px;height:4px;background:#4a4a4a"></div><div class="a" style="left:625.0px;top:86px;width:1px;height:2px;background:#4a4a4a"></div><div class="a" style="left:629.8px;top:86px;width:1px;height:2px;background:#4a4a4a"></div><div class="a" style="left:634.6px;top:86px;width:1px;height:2px;background:#4a4a4a"></div><div class="a" style="left:639.4px;top:86px;width:1px;height:2px;background:#4a4a4a"></div><div class="t" style="left:598.2px;top:77px;font-size:7.5px;color:#d8d8d8">255</div><div class="a" style="left:644.2px;top:76px;width:1px;height:12px;background:#707070"></div><div class="a" style="left:649.0px;top:86px;width:1px;height:2px;background:#4a4a4a"></div><div class="a" style="left:653.8px;top:86px;width:1px;height:2px;background:#4a4a4a"></div><div class="a" style="left:658.6px;top:86px;width:1px;height:2px;background:#4a4a4a"></div><div class="a" style="left:663.4px;top:86px;width:1px;height:2px;background:#4a4a4a"></div><div class="a" style="left:668.2px;top:84px;width:1px;height:4px;background:#4a4a4a"></div><div class="a" style="left:673.1px;top:86px;width:1px;height:2px;background:#4a4a4a"></div><div class="a" style="left:677.9px;top:86px;width:1px;height:2px;background:#4a4a4a"></div><div class="a" style="left:682.7px;top:86px;width:1px;height:2px;background:#4a4a4a"></div><div class="a" style="left:687.5px;top:86px;width:1px;height:2px;background:#4a4a4a"></div><div class="t" style="left:646.2px;top:77px;font-size:7.5px;color:#d8d8d8">260</div><div class="a" style="left:692.3px;top:76px;width:1px;height:12px;background:#707070"></div><div class="a" style="left:697.1px;top:86px;width:1px;height:2px;background:#4a4a4a"></div><div class="a" style="left:701.9px;top:86px;width:1px;height:2px;background:#4a4a4a"></div><div class="a" style="left:706.7px;top:86px;width:1px;height:2px;background:#4a4a4a"></div><div class="a" style="left:711.5px;top:86px;width:1px;height:2px;background:#4a4a4a"></div><div class="a" style="left:716.3px;top:84px;width:1px;height:4px;background:#4a4a4a"></div><div class="a" style="left:721.1px;top:86px;width:1px;height:2px;background:#4a4a4a"></div><div class="a" style="left:725.9px;top:86px;width:1px;height:2px;background:#4a4a4a"></div><div class="a" style="left:730.7px;top:86px;width:1px;height:2px;background:#4a4a4a"></div><div class="a" style="left:735.5px;top:86px;width:1px;height:2px;background:#4a4a4a"></div><div class="t" style="left:694.3px;top:77px;font-size:7.5px;color:#d8d8d8">265</div><div class="a" style="left:740.3px;top:76px;width:1px;height:12px;background:#707070"></div><div class="a" style="left:745.1px;top:86px;width:1px;height:2px;background:#4a4a4a"></div><div class="a" style="left:750.0px;top:86px;width:1px;height:2px;background:#4a4a4a"></div><div class="a" style="left:754.8px;top:86px;width:1px;height:2px;background:#4a4a4a"></div><div class="a" style="left:759.6px;top:86px;width:1px;height:2px;background:#4a4a4a"></div><div class="a" style="left:764.4px;top:84px;width:1px;height:4px;background:#4a4a4a"></div><div class="a" style="left:769.2px;top:86px;width:1px;height:2px;background:#4a4a4a"></div><div class="a" style="left:774.0px;top:86px;width:1px;height:2px;background:#4a4a4a"></div><div class="a" style="left:778.8px;top:86px;width:1px;height:2px;background:#4a4a4a"></div><div class="a" style="left:783.6px;top:86px;width:1px;height:2px;background:#4a4a4a"></div><div class="t" style="left:742.3px;top:77px;font-size:7.5px;color:#d8d8d8">270</div><div class="a" style="left:788.4px;top:76px;width:1px;height:12px;background:#707070"></div><div class="a" style="left:793.2px;top:86px;width:1px;height:2px;background:#4a4a4a"></div><div class="a" style="left:798.0px;top:86px;width:1px;height:2px;background:#4a4a4a"></div><div class="a" style="left:802.8px;top:86px;width:1px;height:2px;background:#4a4a4a"></div><div class="a" style="left:807.6px;top:86px;width:1px;height:2px;background:#4a4a4a"></div><div class="a" style="left:812.4px;top:84px;width:1px;height:4px;background:#4a4a4a"></div><div class="a" style="left:817.2px;top:86px;width:1px;height:2px;background:#4a4a4a"></div><div class="a" style="left:822.0px;top:86px;width:1px;height:2px;background:#4a4a4a"></div><div class="a" style="left:826.8px;top:86px;width:1px;height:2px;background:#4a4a4a"></div><div class="a" style="left:831.7px;top:86px;width:1px;height:2px;background:#4a4a4a"></div><div class="t" style="left:790.4px;top:77px;font-size:7.5px;color:#d8d8d8">275</div><div class="a" style="left:836.5px;top:76px;width:1px;height:12px;background:#707070"></div><div class="a" style="left:841.3px;top:86px;width:1px;height:2px;background:#4a4a4a"></div><div class="a" style="left:846.1px;top:86px;width:1px;height:2px;background:#4a4a4a"></div><div class="a" style="left:850.9px;top:86px;width:1px;height:2px;background:#4a4a4a"></div><div class="a" style="left:855.7px;top:86px;width:1px;height:2px;background:#4a4a4a"></div><div class="a" style="left:860.5px;top:84px;width:1px;height:4px;background:#4a4a4a"></div><div class="a" style="left:865.3px;top:86px;width:1px;height:2px;background:#4a4a4a"></div><div class="a" style="left:870.1px;top:86px;width:1px;height:2px;background:#4a4a4a"></div><div class="a" style="left:874.9px;top:86px;width:1px;height:2px;background:#4a4a4a"></div><div class="a" style="left:879.7px;top:86px;width:1px;height:2px;background:#4a4a4a"></div><div class="t" style="left:838.5px;top:77px;font-size:7.5px;color:#d8d8d8">280</div><div class="a" style="left:884.5px;top:76px;width:1px;height:12px;background:#707070"></div><div class="a" style="left:889.3px;top:86px;width:1px;height:2px;background:#4a4a4a"></div><div class="a" style="left:894.1px;top:86px;width:1px;height:2px;background:#4a4a4a"></div><div class="a" style="left:898.9px;top:86px;width:1px;height:2px;background:#4a4a4a"></div><div class="a" style="left:903.7px;top:86px;width:1px;height:2px;background:#4a4a4a"></div><div class="a" style="left:908.5px;top:84px;width:1px;height:4px;background:#4a4a4a"></div><div class="a" style="left:913.4px;top:86px;width:1px;height:2px;background:#4a4a4a"></div><div class="a" style="left:918.2px;top:86px;width:1px;height:2px;background:#4a4a4a"></div><div class="a" style="left:923.0px;top:86px;width:1px;height:2px;background:#4a4a4a"></div><div class="a" style="left:927.8px;top:86px;width:1px;height:2px;background:#4a4a4a"></div><div class="t" style="left:886.5px;top:77px;font-size:7.5px;color:#d8d8d8">285</div><div class="a" style="left:932.6px;top:76px;width:1px;height:12px;background:#707070"></div><div class="a" style="left:937.4px;top:86px;width:1px;height:2px;background:#4a4a4a"></div><div class="a" style="left:942.2px;top:86px;width:1px;height:2px;background:#4a4a4a"></div><div class="a" style="left:947.0px;top:86px;width:1px;height:2px;background:#4a4a4a"></div><div class="a" style="left:951.8px;top:86px;width:1px;height:2px;background:#4a4a4a"></div><div class="a" style="left:956.6px;top:84px;width:1px;height:4px;background:#4a4a4a"></div><div class="a" style="left:961.4px;top:86px;width:1px;height:2px;background:#4a4a4a"></div><div class="a" style="left:966.2px;top:86px;width:1px;height:2px;background:#4a4a4a"></div><div class="a" style="left:971.0px;top:86px;width:1px;height:2px;background:#4a4a4a"></div><div class="a" style="left:975.8px;top:86px;width:1px;height:2px;background:#4a4a4a"></div><div class="t" style="left:934.6px;top:77px;font-size:7.5px;color:#d8d8d8">290</div><div class="a" style="left:980.6px;top:76px;width:1px;height:12px;background:#707070"></div><div class="a" style="left:985.4px;top:86px;width:1px;height:2px;background:#4a4a4a"></div><div class="a" style="left:990.3px;top:86px;width:1px;height:2px;background:#4a4a4a"></div><div class="a" style="left:995.1px;top:86px;width:1px;height:2px;background:#4a4a4a"></div><div class="a" style="left:999.9px;top:86px;width:1px;height:2px;background:#4a4a4a"></div><div class="a" style="left:1004.7px;top:84px;width:1px;height:4px;background:#4a4a4a"></div><div class="a" style="left:1009.5px;top:86px;width:1px;height:2px;background:#4a4a4a"></div><div class="a" style="left:1014.3px;top:86px;width:1px;height:2px;background:#4a4a4a"></div><div class="a" style="left:1019.1px;top:86px;width:1px;height:2px;background:#4a4a4a"></div><div class="a" style="left:1023.9px;top:86px;width:1px;height:2px;background:#4a4a4a"></div><div class="t" style="left:982.6px;top:77px;font-size:7.5px;color:#d8d8d8">295</div><div class="a" style="left:1028.7px;top:76px;width:1px;height:12px;background:#707070"></div><div class="a" style="left:1033.5px;top:86px;width:1px;height:2px;background:#4a4a4a"></div><div class="a" style="left:1038.3px;top:86px;width:1px;height:2px;background:#4a4a4a"></div><div class="a" style="left:1043.1px;top:86px;width:1px;height:2px;background:#4a4a4a"></div><div class="a" style="left:1047.9px;top:86px;width:1px;height:2px;background:#4a4a4a"></div><div class="a" style="left:1052.7px;top:84px;width:1px;height:4px;background:#4a4a4a"></div><div class="a" style="left:1057.5px;top:86px;width:1px;height:2px;background:#4a4a4a"></div><div class="a" style="left:1062.3px;top:86px;width:1px;height:2px;background:#4a4a4a"></div><div class="a" style="left:1067.1px;top:86px;width:1px;height:2px;background:#4a4a4a"></div><div class="a" style="left:1072.0px;top:86px;width:1px;height:2px;background:#4a4a4a"></div><div class="t" style="left:1030.7px;top:77px;font-size:7.5px;color:#d8d8d8">300</div><div class="a" style="left:1076.8px;top:76px;width:1px;height:12px;background:#707070"></div><div class="a" style="left:1081.6px;top:86px;width:1px;height:2px;background:#4a4a4a"></div><div class="a" style="left:1086.4px;top:86px;width:1px;height:2px;background:#4a4a4a"></div><div class="a" style="left:1091.2px;top:86px;width:1px;height:2px;background:#4a4a4a"></div><div class="a" style="left:1096.0px;top:86px;width:1px;height:2px;background:#4a4a4a"></div><div class="a" style="left:1100.8px;top:84px;width:1px;height:4px;background:#4a4a4a"></div><div class="a" style="left:1105.6px;top:86px;width:1px;height:2px;background:#4a4a4a"></div><div class="a" style="left:1110.4px;top:86px;width:1px;height:2px;background:#4a4a4a"></div><div class="a" style="left:1115.2px;top:86px;width:1px;height:2px;background:#4a4a4a"></div><div class="a" style="left:1120.0px;top:86px;width:1px;height:2px;background:#4a4a4a"></div><div class="t" style="left:1078.8px;top:77px;font-size:7.5px;color:#d8d8d8">305</div><div class="a" style="left:1124.8px;top:76px;width:1px;height:12px;background:#707070"></div><div class="a" style="left:1129.6px;top:86px;width:1px;height:2px;background:#4a4a4a"></div><div class="a" style="left:1134.4px;top:86px;width:1px;height:2px;background:#4a4a4a"></div><div class="a" style="left:1139.2px;top:86px;width:1px;height:2px;background:#4a4a4a"></div><div class="a" style="left:1144.0px;top:86px;width:1px;height:2px;background:#4a4a4a"></div><div class="a" style="left:1148.9px;top:84px;width:1px;height:4px;background:#4a4a4a"></div><div class="a" style="left:1153.7px;top:86px;width:1px;height:2px;background:#4a4a4a"></div><div class="a" style="left:1158.5px;top:86px;width:1px;height:2px;background:#4a4a4a"></div><div class="a" style="left:1163.3px;top:86px;width:1px;height:2px;background:#4a4a4a"></div><div class="a" style="left:1168.1px;top:86px;width:1px;height:2px;background:#4a4a4a"></div><div class="t" style="left:1126.8px;top:77px;font-size:7.5px;color:#d8d8d8">310</div><div class="a" style="left:1172.9px;top:76px;width:1px;height:12px;background:#707070"></div><div class="a" style="left:1177.7px;top:86px;width:1px;height:2px;background:#4a4a4a"></div><div class="a" style="left:1182.5px;top:86px;width:1px;height:2px;background:#4a4a4a"></div><div class="a" style="left:1187.3px;top:86px;width:1px;height:2px;background:#4a4a4a"></div><div class="a" style="left:1192.1px;top:86px;width:1px;height:2px;background:#4a4a4a"></div><div class="a" style="left:1196.9px;top:84px;width:1px;height:4px;background:#4a4a4a"></div><div class="a" style="left:1201.7px;top:86px;width:1px;height:2px;background:#4a4a4a"></div><div class="a" style="left:1206.5px;top:86px;width:1px;height:2px;background:#4a4a4a"></div><div class="a" style="left:1211.3px;top:86px;width:1px;height:2px;background:#4a4a4a"></div><div class="a" style="left:1216.1px;top:86px;width:1px;height:2px;background:#4a4a4a"></div><div class="t" style="left:1174.9px;top:77px;font-size:7.5px;color:#d8d8d8">315</div><div class="a" style="left:1220.9px;top:76px;width:1px;height:12px;background:#707070"></div><div class="a" style="left:1225.7px;top:86px;width:1px;height:2px;background:#4a4a4a"></div><div class="a" style="left:1230.6px;top:86px;width:1px;height:2px;background:#4a4a4a"></div><div class="a" style="left:1235.4px;top:86px;width:1px;height:2px;background:#4a4a4a"></div><div class="a" style="left:1240.2px;top:86px;width:1px;height:2px;background:#4a4a4a"></div><div class="a" style="left:1245.0px;top:84px;width:1px;height:4px;background:#4a4a4a"></div><div class="a" style="left:1249.8px;top:86px;width:1px;height:2px;background:#4a4a4a"></div><div class="a" style="left:1254.6px;top:86px;width:1px;height:2px;background:#4a4a4a"></div><div class="a" style="left:1259.4px;top:86px;width:1px;height:2px;background:#4a4a4a"></div><div class="a" style="left:1264.2px;top:86px;width:1px;height:2px;background:#4a4a4a"></div><div class="t" style="left:1222.9px;top:77px;font-size:7.5px;color:#d8d8d8">320</div><div class="a" style="left:1269.0px;top:76px;width:1px;height:12px;background:#707070"></div><div class="a" style="left:1273.8px;top:86px;width:1px;height:2px;background:#4a4a4a"></div><div class="a" style="left:1278.6px;top:86px;width:1px;height:2px;background:#4a4a4a"></div><div class="a" style="left:1283.4px;top:86px;width:1px;height:2px;background:#4a4a4a"></div><div class="a" style="left:1288.2px;top:86px;width:1px;height:2px;background:#4a4a4a"></div><div class="a" style="left:1293.0px;top:84px;width:1px;height:4px;background:#4a4a4a"></div><div class="a" style="left:1297.8px;top:86px;width:1px;height:2px;background:#4a4a4a"></div><div class="a" style="left:1302.6px;top:86px;width:1px;height:2px;background:#4a4a4a"></div><div class="a" style="left:1307.4px;top:86px;width:1px;height:2px;background:#4a4a4a"></div><div class="a" style="left:1312.3px;top:86px;width:1px;height:2px;background:#4a4a4a"></div><div class="t" style="left:1271.0px;top:77px;font-size:7.5px;color:#d8d8d8">325</div><div class="a" style="left:1317.1px;top:76px;width:1px;height:12px;background:#707070"></div><div class="a" style="left:1321.9px;top:86px;width:1px;height:2px;background:#4a4a4a"></div><div class="a" style="left:1326.7px;top:86px;width:1px;height:2px;background:#4a4a4a"></div><div class="a" style="left:1331.5px;top:86px;width:1px;height:2px;background:#4a4a4a"></div><div class="a" style="left:1336.3px;top:86px;width:1px;height:2px;background:#4a4a4a"></div><div class="a" style="left:1341.1px;top:84px;width:1px;height:4px;background:#4a4a4a"></div><div class="a" style="left:1345.9px;top:86px;width:1px;height:2px;background:#4a4a4a"></div><div class="a" style="left:1350.7px;top:86px;width:1px;height:2px;background:#4a4a4a"></div><div class="a" style="left:1355.5px;top:86px;width:1px;height:2px;background:#4a4a4a"></div><div class="a" style="left:1360.3px;top:86px;width:1px;height:2px;background:#4a4a4a"></div><div class="t" style="left:1319.1px;top:77px;font-size:7.5px;color:#d8d8d8">330</div><div class="a" style="left:1365.1px;top:76px;width:1px;height:12px;background:#707070"></div><div class="a" style="left:1369.9px;top:86px;width:1px;height:2px;background:#4a4a4a"></div><div class="a" style="left:1374.7px;top:86px;width:1px;height:2px;background:#4a4a4a"></div><div class="a" style="left:1379.5px;top:86px;width:1px;height:2px;background:#4a4a4a"></div><div class="a" style="left:1384.3px;top:86px;width:1px;height:2px;background:#4a4a4a"></div><div class="a" style="left:1389.2px;top:84px;width:1px;height:4px;background:#4a4a4a"></div><div class="a" style="left:1394.0px;top:86px;width:1px;height:2px;background:#4a4a4a"></div><div class="a" style="left:1398.8px;top:86px;width:1px;height:2px;background:#4a4a4a"></div><div class="a" style="left:1403.6px;top:86px;width:1px;height:2px;background:#4a4a4a"></div><div class="a" style="left:1408.4px;top:86px;width:1px;height:2px;background:#4a4a4a"></div><div class="t" style="left:1367.1px;top:77px;font-size:7.5px;color:#d8d8d8">335</div><div class="a" style="left:1413.2px;top:76px;width:1px;height:12px;background:#707070"></div><div class="a" style="left:1418.0px;top:86px;width:1px;height:2px;background:#4a4a4a"></div><div class="a" style="left:1422.8px;top:86px;width:1px;height:2px;background:#4a4a4a"></div><div class="a" style="left:1427.6px;top:86px;width:1px;height:2px;background:#4a4a4a"></div><div class="a" style="left:1432.4px;top:86px;width:1px;height:2px;background:#4a4a4a"></div><div class="t" style="left:1415.2px;top:77px;font-size:7.5px;color:#d8d8d8">340</div><div class="a" style="left:42px;top:88px;width:13px;height:914px;background:#222"></div><div class="a" style="left:42px;top:103.5px;width:13px;height:1px;background:#707070"></div><div class="a" style="left:53px;top:108.3px;width:2px;height:1px;background:#4a4a4a"></div><div class="a" style="left:53px;top:113.1px;width:2px;height:1px;background:#4a4a4a"></div><div class="a" style="left:53px;top:117.9px;width:2px;height:1px;background:#4a4a4a"></div><div class="a" style="left:53px;top:122.7px;width:2px;height:1px;background:#4a4a4a"></div><div class="a" style="left:51px;top:127.5px;width:4px;height:1px;background:#4a4a4a"></div><div class="a" style="left:53px;top:132.3px;width:2px;height:1px;background:#4a4a4a"></div><div class="a" style="left:53px;top:137.1px;width:2px;height:1px;background:#4a4a4a"></div><div class="a" style="left:53px;top:141.9px;width:2px;height:1px;background:#4a4a4a"></div><div class="a" style="left:53px;top:146.8px;width:2px;height:1px;background:#4a4a4a"></div><div class="t" style="left:38px;top:111.0px;width:18px;height:8px;font-size:7.5px;line-height:8px;letter-spacing:1.6px;color:#d0d0d0;text-align:center;transform:rotate(90deg)">120</div><div class="a" style="left:42px;top:151.6px;width:13px;height:1px;background:#707070"></div><div class="a" style="left:53px;top:156.4px;width:2px;height:1px;background:#4a4a4a"></div><div class="a" style="left:53px;top:161.2px;width:2px;height:1px;background:#4a4a4a"></div><div class="a" style="left:53px;top:166.0px;width:2px;height:1px;background:#4a4a4a"></div><div class="a" style="left:53px;top:170.8px;width:2px;height:1px;background:#4a4a4a"></div><div class="a" style="left:51px;top:175.6px;width:4px;height:1px;background:#4a4a4a"></div><div class="a" style="left:53px;top:180.4px;width:2px;height:1px;background:#4a4a4a"></div><div class="a" style="left:53px;top:185.2px;width:2px;height:1px;background:#4a4a4a"></div><div class="a" style="left:53px;top:190.0px;width:2px;height:1px;background:#4a4a4a"></div><div class="a" style="left:53px;top:194.8px;width:2px;height:1px;background:#4a4a4a"></div><div class="t" style="left:38px;top:159.1px;width:18px;height:8px;font-size:7.5px;line-height:8px;letter-spacing:1.6px;color:#d0d0d0;text-align:center;transform:rotate(90deg)">125</div><div class="a" style="left:42px;top:199.6px;width:13px;height:1px;background:#707070"></div><div class="a" style="left:53px;top:204.4px;width:2px;height:1px;background:#4a4a4a"></div><div class="a" style="left:53px;top:209.2px;width:2px;height:1px;background:#4a4a4a"></div><div class="a" style="left:53px;top:214.0px;width:2px;height:1px;background:#4a4a4a"></div><div class="a" style="left:53px;top:218.8px;width:2px;height:1px;background:#4a4a4a"></div><div class="a" style="left:51px;top:223.7px;width:4px;height:1px;background:#4a4a4a"></div><div class="a" style="left:53px;top:228.5px;width:2px;height:1px;background:#4a4a4a"></div><div class="a" style="left:53px;top:233.3px;width:2px;height:1px;background:#4a4a4a"></div><div class="a" style="left:53px;top:238.1px;width:2px;height:1px;background:#4a4a4a"></div><div class="a" style="left:53px;top:242.9px;width:2px;height:1px;background:#4a4a4a"></div><div class="t" style="left:38px;top:207.1px;width:18px;height:8px;font-size:7.5px;line-height:8px;letter-spacing:1.6px;color:#d0d0d0;text-align:center;transform:rotate(90deg)">130</div><div class="a" style="left:42px;top:247.7px;width:13px;height:1px;background:#707070"></div><div class="a" style="left:53px;top:252.5px;width:2px;height:1px;background:#4a4a4a"></div><div class="a" style="left:53px;top:257.3px;width:2px;height:1px;background:#4a4a4a"></div><div class="a" style="left:53px;top:262.1px;width:2px;height:1px;background:#4a4a4a"></div><div class="a" style="left:53px;top:266.9px;width:2px;height:1px;background:#4a4a4a"></div><div class="a" style="left:51px;top:271.7px;width:4px;height:1px;background:#4a4a4a"></div><div class="a" style="left:53px;top:276.5px;width:2px;height:1px;background:#4a4a4a"></div><div class="a" style="left:53px;top:281.3px;width:2px;height:1px;background:#4a4a4a"></div><div class="a" style="left:53px;top:286.1px;width:2px;height:1px;background:#4a4a4a"></div><div class="a" style="left:53px;top:290.9px;width:2px;height:1px;background:#4a4a4a"></div><div class="t" style="left:38px;top:255.2px;width:18px;height:8px;font-size:7.5px;line-height:8px;letter-spacing:1.6px;color:#d0d0d0;text-align:center;transform:rotate(90deg)">135</div><div class="a" style="left:42px;top:295.7px;width:13px;height:1px;background:#707070"></div><div class="a" style="left:53px;top:300.5px;width:2px;height:1px;background:#4a4a4a"></div><div class="a" style="left:53px;top:305.4px;width:2px;height:1px;background:#4a4a4a"></div><div class="a" style="left:53px;top:310.2px;width:2px;height:1px;background:#4a4a4a"></div><div class="a" style="left:53px;top:315.0px;width:2px;height:1px;background:#4a4a4a"></div><div class="a" style="left:51px;top:319.8px;width:4px;height:1px;background:#4a4a4a"></div><div class="a" style="left:53px;top:324.6px;width:2px;height:1px;background:#4a4a4a"></div><div class="a" style="left:53px;top:329.4px;width:2px;height:1px;background:#4a4a4a"></div><div class="a" style="left:53px;top:334.2px;width:2px;height:1px;background:#4a4a4a"></div><div class="a" style="left:53px;top:339.0px;width:2px;height:1px;background:#4a4a4a"></div><div class="t" style="left:38px;top:303.2px;width:18px;height:8px;font-size:7.5px;line-height:8px;letter-spacing:1.6px;color:#d0d0d0;text-align:center;transform:rotate(90deg)">140</div><div class="a" style="left:42px;top:343.8px;width:13px;height:1px;background:#707070"></div><div class="a" style="left:53px;top:348.6px;width:2px;height:1px;background:#4a4a4a"></div><div class="a" style="left:53px;top:353.4px;width:2px;height:1px;background:#4a4a4a"></div><div class="a" style="left:53px;top:358.2px;width:2px;height:1px;background:#4a4a4a"></div><div class="a" style="left:53px;top:363.0px;width:2px;height:1px;background:#4a4a4a"></div><div class="a" style="left:51px;top:367.8px;width:4px;height:1px;background:#4a4a4a"></div><div class="a" style="left:53px;top:372.6px;width:2px;height:1px;background:#4a4a4a"></div><div class="a" style="left:53px;top:377.4px;width:2px;height:1px;background:#4a4a4a"></div><div class="a" style="left:53px;top:382.2px;width:2px;height:1px;background:#4a4a4a"></div><div class="a" style="left:53px;top:387.1px;width:2px;height:1px;background:#4a4a4a"></div><div class="t" style="left:38px;top:351.3px;width:18px;height:8px;font-size:7.5px;line-height:8px;letter-spacing:1.6px;color:#d0d0d0;text-align:center;transform:rotate(90deg)">145</div><div class="a" style="left:42px;top:391.9px;width:13px;height:1px;background:#707070"></div><div class="a" style="left:53px;top:396.7px;width:2px;height:1px;background:#4a4a4a"></div><div class="a" style="left:53px;top:401.5px;width:2px;height:1px;background:#4a4a4a"></div><div class="a" style="left:53px;top:406.3px;width:2px;height:1px;background:#4a4a4a"></div><div class="a" style="left:53px;top:411.1px;width:2px;height:1px;background:#4a4a4a"></div><div class="a" style="left:51px;top:415.9px;width:4px;height:1px;background:#4a4a4a"></div><div class="a" style="left:53px;top:420.7px;width:2px;height:1px;background:#4a4a4a"></div><div class="a" style="left:53px;top:425.5px;width:2px;height:1px;background:#4a4a4a"></div><div class="a" style="left:53px;top:430.3px;width:2px;height:1px;background:#4a4a4a"></div><div class="a" style="left:53px;top:435.1px;width:2px;height:1px;background:#4a4a4a"></div><div class="t" style="left:38px;top:399.4px;width:18px;height:8px;font-size:7.5px;line-height:8px;letter-spacing:1.6px;color:#d0d0d0;text-align:center;transform:rotate(90deg)">150</div><div class="a" style="left:42px;top:439.9px;width:13px;height:1px;background:#707070"></div><div class="a" style="left:53px;top:444.7px;width:2px;height:1px;background:#4a4a4a"></div><div class="a" style="left:53px;top:449.5px;width:2px;height:1px;background:#4a4a4a"></div><div class="a" style="left:53px;top:454.3px;width:2px;height:1px;background:#4a4a4a"></div><div class="a" style="left:53px;top:459.1px;width:2px;height:1px;background:#4a4a4a"></div><div class="a" style="left:51px;top:464.0px;width:4px;height:1px;background:#4a4a4a"></div><div class="a" style="left:53px;top:468.8px;width:2px;height:1px;background:#4a4a4a"></div><div class="a" style="left:53px;top:473.6px;width:2px;height:1px;background:#4a4a4a"></div><div class="a" style="left:53px;top:478.4px;width:2px;height:1px;background:#4a4a4a"></div><div class="a" style="left:53px;top:483.2px;width:2px;height:1px;background:#4a4a4a"></div><div class="t" style="left:38px;top:447.4px;width:18px;height:8px;font-size:7.5px;line-height:8px;letter-spacing:1.6px;color:#d0d0d0;text-align:center;transform:rotate(90deg)">155</div><div class="a" style="left:42px;top:488.0px;width:13px;height:1px;background:#707070"></div><div class="a" style="left:53px;top:492.8px;width:2px;height:1px;background:#4a4a4a"></div><div class="a" style="left:53px;top:497.6px;width:2px;height:1px;background:#4a4a4a"></div><div class="a" style="left:53px;top:502.4px;width:2px;height:1px;background:#4a4a4a"></div><div class="a" style="left:53px;top:507.2px;width:2px;height:1px;background:#4a4a4a"></div><div class="a" style="left:51px;top:512.0px;width:4px;height:1px;background:#4a4a4a"></div><div class="a" style="left:53px;top:516.8px;width:2px;height:1px;background:#4a4a4a"></div><div class="a" style="left:53px;top:521.6px;width:2px;height:1px;background:#4a4a4a"></div><div class="a" style="left:53px;top:526.4px;width:2px;height:1px;background:#4a4a4a"></div><div class="a" style="left:53px;top:531.2px;width:2px;height:1px;background:#4a4a4a"></div><div class="t" style="left:38px;top:495.5px;width:18px;height:8px;font-size:7.5px;line-height:8px;letter-spacing:1.6px;color:#d0d0d0;text-align:center;transform:rotate(90deg)">160</div><div class="a" style="left:42px;top:536.0px;width:13px;height:1px;background:#707070"></div><div class="a" style="left:53px;top:540.8px;width:2px;height:1px;background:#4a4a4a"></div><div class="a" style="left:53px;top:545.7px;width:2px;height:1px;background:#4a4a4a"></div><div class="a" style="left:53px;top:550.5px;width:2px;height:1px;background:#4a4a4a"></div><div class="a" style="left:53px;top:555.3px;width:2px;height:1px;background:#4a4a4a"></div><div class="a" style="left:51px;top:560.1px;width:4px;height:1px;background:#4a4a4a"></div><div class="a" style="left:53px;top:564.9px;width:2px;height:1px;background:#4a4a4a"></div><div class="a" style="left:53px;top:569.7px;width:2px;height:1px;background:#4a4a4a"></div><div class="a" style="left:53px;top:574.5px;width:2px;height:1px;background:#4a4a4a"></div><div class="a" style="left:53px;top:579.3px;width:2px;height:1px;background:#4a4a4a"></div><div class="t" style="left:38px;top:543.5px;width:18px;height:8px;font-size:7.5px;line-height:8px;letter-spacing:1.6px;color:#d0d0d0;text-align:center;transform:rotate(90deg)">165</div><div class="a" style="left:42px;top:584.1px;width:13px;height:1px;background:#707070"></div><div class="a" style="left:53px;top:588.9px;width:2px;height:1px;background:#4a4a4a"></div><div class="a" style="left:53px;top:593.7px;width:2px;height:1px;background:#4a4a4a"></div><div class="a" style="left:53px;top:598.5px;width:2px;height:1px;background:#4a4a4a"></div><div class="a" style="left:53px;top:603.3px;width:2px;height:1px;background:#4a4a4a"></div><div class="a" style="left:51px;top:608.1px;width:4px;height:1px;background:#4a4a4a"></div><div class="a" style="left:53px;top:612.9px;width:2px;height:1px;background:#4a4a4a"></div><div class="a" style="left:53px;top:617.7px;width:2px;height:1px;background:#4a4a4a"></div><div class="a" style="left:53px;top:622.5px;width:2px;height:1px;background:#4a4a4a"></div><div class="a" style="left:53px;top:627.4px;width:2px;height:1px;background:#4a4a4a"></div><div class="t" style="left:38px;top:591.6px;width:18px;height:8px;font-size:7.5px;line-height:8px;letter-spacing:1.6px;color:#d0d0d0;text-align:center;transform:rotate(90deg)">170</div><div class="a" style="left:42px;top:632.2px;width:13px;height:1px;background:#707070"></div><div class="a" style="left:53px;top:637.0px;width:2px;height:1px;background:#4a4a4a"></div><div class="a" style="left:53px;top:641.8px;width:2px;height:1px;background:#4a4a4a"></div><div class="a" style="left:53px;top:646.6px;width:2px;height:1px;background:#4a4a4a"></div><div class="a" style="left:53px;top:651.4px;width:2px;height:1px;background:#4a4a4a"></div><div class="a" style="left:51px;top:656.2px;width:4px;height:1px;background:#4a4a4a"></div><div class="a" style="left:53px;top:661.0px;width:2px;height:1px;background:#4a4a4a"></div><div class="a" style="left:53px;top:665.8px;width:2px;height:1px;background:#4a4a4a"></div><div class="a" style="left:53px;top:670.6px;width:2px;height:1px;background:#4a4a4a"></div><div class="a" style="left:53px;top:675.4px;width:2px;height:1px;background:#4a4a4a"></div><div class="t" style="left:38px;top:639.7px;width:18px;height:8px;font-size:7.5px;line-height:8px;letter-spacing:1.6px;color:#d0d0d0;text-align:center;transform:rotate(90deg)">175</div><div class="a" style="left:42px;top:680.2px;width:13px;height:1px;background:#707070"></div><div class="a" style="left:53px;top:685.0px;width:2px;height:1px;background:#4a4a4a"></div><div class="a" style="left:53px;top:689.8px;width:2px;height:1px;background:#4a4a4a"></div><div class="a" style="left:53px;top:694.6px;width:2px;height:1px;background:#4a4a4a"></div><div class="a" style="left:53px;top:699.4px;width:2px;height:1px;background:#4a4a4a"></div><div class="a" style="left:51px;top:704.2px;width:4px;height:1px;background:#4a4a4a"></div><div class="a" style="left:53px;top:709.1px;width:2px;height:1px;background:#4a4a4a"></div><div class="a" style="left:53px;top:713.9px;width:2px;height:1px;background:#4a4a4a"></div><div class="a" style="left:53px;top:718.7px;width:2px;height:1px;background:#4a4a4a"></div><div class="a" style="left:53px;top:723.5px;width:2px;height:1px;background:#4a4a4a"></div><div class="t" style="left:38px;top:687.7px;width:18px;height:8px;font-size:7.5px;line-height:8px;letter-spacing:1.6px;color:#d0d0d0;text-align:center;transform:rotate(90deg)">180</div><div class="a" style="left:42px;top:728.3px;width:13px;height:1px;background:#707070"></div><div class="a" style="left:53px;top:733.1px;width:2px;height:1px;background:#4a4a4a"></div><div class="a" style="left:53px;top:737.9px;width:2px;height:1px;background:#4a4a4a"></div><div class="a" style="left:53px;top:742.7px;width:2px;height:1px;background:#4a4a4a"></div><div class="a" style="left:53px;top:747.5px;width:2px;height:1px;background:#4a4a4a"></div><div class="a" style="left:51px;top:752.3px;width:4px;height:1px;background:#4a4a4a"></div><div class="a" style="left:53px;top:757.1px;width:2px;height:1px;background:#4a4a4a"></div><div class="a" style="left:53px;top:761.9px;width:2px;height:1px;background:#4a4a4a"></div><div class="a" style="left:53px;top:766.7px;width:2px;height:1px;background:#4a4a4a"></div><div class="a" style="left:53px;top:771.5px;width:2px;height:1px;background:#4a4a4a"></div><div class="t" style="left:38px;top:735.8px;width:18px;height:8px;font-size:7.5px;line-height:8px;letter-spacing:1.6px;color:#d0d0d0;text-align:center;transform:rotate(90deg)">185</div><div class="a" style="left:42px;top:776.3px;width:13px;height:1px;background:#707070"></div><div class="a" style="left:53px;top:781.1px;width:2px;height:1px;background:#4a4a4a"></div><div class="a" style="left:53px;top:786.0px;width:2px;height:1px;background:#4a4a4a"></div><div class="a" style="left:53px;top:790.8px;width:2px;height:1px;background:#4a4a4a"></div><div class="a" style="left:53px;top:795.6px;width:2px;height:1px;background:#4a4a4a"></div><div class="a" style="left:51px;top:800.4px;width:4px;height:1px;background:#4a4a4a"></div><div class="a" style="left:53px;top:805.2px;width:2px;height:1px;background:#4a4a4a"></div><div class="a" style="left:53px;top:810.0px;width:2px;height:1px;background:#4a4a4a"></div><div class="a" style="left:53px;top:814.8px;width:2px;height:1px;background:#4a4a4a"></div><div class="a" style="left:53px;top:819.6px;width:2px;height:1px;background:#4a4a4a"></div><div class="t" style="left:38px;top:783.8px;width:18px;height:8px;font-size:7.5px;line-height:8px;letter-spacing:1.6px;color:#d0d0d0;text-align:center;transform:rotate(90deg)">190</div><div class="a" style="left:42px;top:824.4px;width:13px;height:1px;background:#707070"></div><div class="a" style="left:53px;top:829.2px;width:2px;height:1px;background:#4a4a4a"></div><div class="a" style="left:53px;top:834.0px;width:2px;height:1px;background:#4a4a4a"></div><div class="a" style="left:53px;top:838.8px;width:2px;height:1px;background:#4a4a4a"></div><div class="a" style="left:53px;top:843.6px;width:2px;height:1px;background:#4a4a4a"></div><div class="a" style="left:51px;top:848.4px;width:4px;height:1px;background:#4a4a4a"></div><div class="a" style="left:53px;top:853.2px;width:2px;height:1px;background:#4a4a4a"></div><div class="a" style="left:53px;top:858.0px;width:2px;height:1px;background:#4a4a4a"></div><div class="a" style="left:53px;top:862.8px;width:2px;height:1px;background:#4a4a4a"></div><div class="a" style="left:53px;top:867.7px;width:2px;height:1px;background:#4a4a4a"></div><div class="t" style="left:38px;top:831.9px;width:18px;height:8px;font-size:7.5px;line-height:8px;letter-spacing:1.6px;color:#d0d0d0;text-align:center;transform:rotate(90deg)">195</div><div class="a" style="left:42px;top:872.5px;width:13px;height:1px;background:#707070"></div><div class="a" style="left:53px;top:877.3px;width:2px;height:1px;background:#4a4a4a"></div><div class="a" style="left:53px;top:882.1px;width:2px;height:1px;background:#4a4a4a"></div><div class="a" style="left:53px;top:886.9px;width:2px;height:1px;background:#4a4a4a"></div><div class="a" style="left:53px;top:891.7px;width:2px;height:1px;background:#4a4a4a"></div><div class="a" style="left:51px;top:896.5px;width:4px;height:1px;background:#4a4a4a"></div><div class="a" style="left:53px;top:901.3px;width:2px;height:1px;background:#4a4a4a"></div><div class="a" style="left:53px;top:906.1px;width:2px;height:1px;background:#4a4a4a"></div><div class="a" style="left:53px;top:910.9px;width:2px;height:1px;background:#4a4a4a"></div><div class="a" style="left:53px;top:915.7px;width:2px;height:1px;background:#4a4a4a"></div><div class="t" style="left:38px;top:880.0px;width:18px;height:8px;font-size:7.5px;line-height:8px;letter-spacing:1.6px;color:#d0d0d0;text-align:center;transform:rotate(90deg)">200</div><div class="a" style="left:42px;top:920.5px;width:13px;height:1px;background:#707070"></div><div class="a" style="left:53px;top:925.3px;width:2px;height:1px;background:#4a4a4a"></div><div class="a" style="left:53px;top:930.1px;width:2px;height:1px;background:#4a4a4a"></div><div class="a" style="left:53px;top:934.9px;width:2px;height:1px;background:#4a4a4a"></div><div class="a" style="left:53px;top:939.7px;width:2px;height:1px;background:#4a4a4a"></div><div class="a" style="left:51px;top:944.5px;width:4px;height:1px;background:#4a4a4a"></div><div class="a" style="left:53px;top:949.4px;width:2px;height:1px;background:#4a4a4a"></div><div class="a" style="left:53px;top:954.2px;width:2px;height:1px;background:#4a4a4a"></div><div class="a" style="left:53px;top:959.0px;width:2px;height:1px;background:#4a4a4a"></div><div class="a" style="left:53px;top:963.8px;width:2px;height:1px;background:#4a4a4a"></div><div class="t" style="left:38px;top:928.0px;width:18px;height:8px;font-size:7.5px;line-height:8px;letter-spacing:1.6px;color:#d0d0d0;text-align:center;transform:rotate(90deg)">205</div><div class="a" style="left:42px;top:968.6px;width:13px;height:1px;background:#707070"></div><div class="a" style="left:53px;top:973.4px;width:2px;height:1px;background:#4a4a4a"></div><div class="a" style="left:53px;top:978.2px;width:2px;height:1px;background:#4a4a4a"></div><div class="a" style="left:53px;top:983.0px;width:2px;height:1px;background:#4a4a4a"></div><div class="a" style="left:53px;top:987.8px;width:2px;height:1px;background:#4a4a4a"></div><div class="a" style="left:51px;top:992.6px;width:4px;height:1px;background:#4a4a4a"></div><div class="a" style="left:53px;top:997.4px;width:2px;height:1px;background:#4a4a4a"></div><div class="a" style="left:53px;top:1002.2px;width:2px;height:1px;background:#4a4a4a"></div><div class="a" style="left:53px;top:1007.0px;width:2px;height:1px;background:#4a4a4a"></div><div class="a" style="left:53px;top:1011.8px;width:2px;height:1px;background:#4a4a4a"></div><div class="t" style="left:38px;top:976.1px;width:18px;height:8px;font-size:7.5px;line-height:8px;letter-spacing:1.6px;color:#d0d0d0;text-align:center;transform:rotate(90deg)">210</div><div class="a" style="left:1434px;top:76px;width:12px;height:926px;background:#2e2e2e"></div><svg class="a" style="left:1435px;top:80px;overflow:visible" width="9" height="7" viewBox="0 0 9 7"><path d="M4.5 0.5L8.5 6.5H0.5Z" fill="#e6e6e6"/></svg><div class="a" style="left:0px;top:72px;width:42px;height:930px;background:#474747"></div><div class="a" style="left:41px;top:62px;width:1px;height:940px;background:#2a2a2a"></div><div class="a" style="left:12px;top:76px;width:17px;height:2px;background:#2e2e2e"></div><div class="a" style="left:3px;top:82px;width:16px;height:16px;background:#333;border-radius:2px"></div><div class="a" style="left:3px;top:81px;width:19px;height:17px;background:#353535;border-radius:2px"></div><svg class="a" style="left:6px;top:83px;overflow:visible" width="12" height="14" viewBox="0 0 12 14"><path d="M1.5 1 L1.5 11.5 L4.3 8.8 L6.5 13 L8.3 12 L6.2 8 L10 8 Z" fill="none" stroke="#d4d4d4" stroke-width="1.3" stroke-linejoin="round"/></svg><svg class="a" style="left:26px;top:83px;overflow:visible" width="11" height="13" viewBox="0 0 11 13"><path d="M1 1 L1 11 L3.8 8.5 L5.8 12.5 L7.5 11.6 L5.6 7.8 L9.3 7.8 Z" fill="#d4d4d4"/></svg><svg class="a" style="left:6px;top:100px;overflow:visible" width="12" height="12" viewBox="0 0 12 12"><path d="M1 1H6L9 4V11H1Z" fill="#d4d4d4"/><path d="M7.5 7L11.5 9.5L7.5 12Z" fill="#d4d4d4"/></svg><svg class="a" style="left:23px;top:100px;overflow:visible" width="15" height="12" viewBox="0 0 15 12"><path d="M1 1V11M14 1V11M3.5 6H11.5M5.5 4L3.5 6L5.5 8M9.5 4L11.5 6L9.5 8" fill="none" stroke="#d4d4d4" stroke-width="1.3"/></svg><svg class="a" style="left:6px;top:115px;overflow:visible" width="12" height="13" viewBox="0 0 12 13"><path d="M1 6V12H11V6" fill="none" stroke="#d4d4d4" stroke-width="1.3"/><path d="M3 8H9M3 10H9" stroke="#d4d4d4" stroke-width="1"/><path d="M4 1L6 4L8 1" fill="none" stroke="#d4d4d4" stroke-width="1.5"/></svg><svg class="a" style="left:24px;top:115px;overflow:visible" width="13" height="13" viewBox="0 0 13 13"><path d="M1 6V12H12V6" fill="none" stroke="#d4d4d4" stroke-width="1.3"/><path d="M3 8H10M3 10H10" stroke="#d4d4d4" stroke-width="1"/><path d="M7 5L11 1" fill="none" stroke="#d4d4d4" stroke-width="1.5"/><circle cx="10.5" cy="2" r="1.6" fill="#d4d4d4"/></svg><svg class="a" style="left:6px;top:136px;overflow:visible" width="12" height="13" viewBox="0 0 12 13"><path d="M1 1.5H11M6 1.5V12M3.8 12H8.2" fill="none" stroke="#d4d4d4" stroke-width="1.6"/></svg><svg class="a" style="left:17px;top:146px;overflow:visible" width="3" height="3" viewBox="0 0 3 3"><path d="M3 0V3H0Z" fill="#d4d4d4"/></svg><svg class="a" style="left:24px;top:136px;overflow:visible" width="13" height="13" viewBox="0 0 13 13"><path d="M1 12L12 1" stroke="#d4d4d4" stroke-width="1.4"/></svg><svg class="a" style="left:6px;top:152px;overflow:visible" width="13" height="13" viewBox="0 0 13 13"><path d="M2 12L4 6L9 1L12 4L7 9Z" fill="#d4d4d4"/><path d="M2 12L6 8" stroke="#474747" stroke-width="1"/></svg><svg class="a" style="left:17px;top:162px;overflow:visible" width="3" height="3" viewBox="0 0 3 3"><path d="M3 0V3H0Z" fill="#d4d4d4"/></svg><svg class="a" style="left:35px;top:162px;overflow:visible" width="3" height="3" viewBox="0 0 3 3"><path d="M3 0V3H0Z" fill="#d4d4d4"/></svg><svg class="a" style="left:24px;top:152px;overflow:visible" width="13" height="13" viewBox="0 0 13 13"><path d="M1.5 11.5L2.5 8.5L9.5 1.5L11.5 3.5L4.5 10.5Z" fill="#d4d4d4"/></svg><svg class="a" style="left:6px;top:169px;overflow:visible" width="12" height="12" viewBox="0 0 12 12"><rect x="1" y="1" width="10" height="10" fill="none" stroke="#d4d4d4" stroke-width="1.3"/><path d="M1 1L11 11M11 1L1 11" stroke="#d4d4d4" stroke-width="1"/></svg><svg class="a" style="left:17px;top:179px;overflow:visible" width="3" height="3" viewBox="0 0 3 3"><path d="M3 0V3H0Z" fill="#d4d4d4"/></svg><svg class="a" style="left:35px;top:179px;overflow:visible" width="3" height="3" viewBox="0 0 3 3"><path d="M3 0V3H0Z" fill="#d4d4d4"/></svg><svg class="a" style="left:25px;top:169px;overflow:visible" width="12" height="12" viewBox="0 0 12 12"><rect x="1" y="1" width="10" height="10" fill="#7a7a7a" stroke="#d4d4d4" stroke-width="1.3"/></svg><svg class="a" style="left:6px;top:189px;overflow:visible" width="12" height="11" viewBox="0 0 12 11"><circle cx="3" cy="8.5" r="2" fill="none" stroke="#d4d4d4" stroke-width="1.2"/><circle cx="9" cy="8.5" r="2" fill="none" stroke="#d4d4d4" stroke-width="1.2"/><path d="M4 7L10 1M8 7L2 1" stroke="#d4d4d4" stroke-width="1.2"/></svg><svg class="a" style="left:23px;top:189px;overflow:visible" width="14" height="12" viewBox="0 0 14 12"><path d="M1 1L1 8L3 6.3L4.5 9L5.5 8.5L4.2 6H7Z" fill="#d4d4d4"/><path d="M6 1H13V11H4" fill="none" stroke="#d4d4d4" stroke-width="1" stroke-dasharray="1.5 1.5"/></svg><svg class="a" style="left:5px;top:206px;overflow:visible" width="13" height="10" viewBox="0 0 13 10"><defs><linearGradient id="g1"><stop offset="0" stop-color="#fff"/><stop offset="1" stop-color="#333"/></linearGradient></defs><rect x="0.5" y="0.5" width="12" height="9" fill="url(#g1)" stroke="#d4d4d4"/></svg><svg class="a" style="left:24px;top:206px;overflow:visible" width="13" height="10" viewBox="0 0 13 10"><rect x="0.5" y="0.5" width="12" height="9" fill="#777" stroke="#d4d4d4"/><path d="M2 4.5Q4 2 6.5 4.5T11 4.5" fill="none" stroke="#fff" stroke-width="1.2"/></svg><svg class="a" style="left:6px;top:227px;overflow:visible" width="12" height="12" viewBox="0 0 12 12"><path d="M1 1H11V8L8 11H1Z" fill="none" stroke="#d4d4d4" stroke-width="1.3"/><rect x="3" y="3" width="6" height="4" fill="#d4d4d4"/></svg><svg class="a" style="left:23px;top:225px;overflow:visible" width="14" height="14" viewBox="0 0 14 14"><path d="M2 12L9 5L10.5 6.5L3.5 13.5Z" fill="#d4d4d4"/><circle cx="11" cy="3" r="2.2" fill="#d4d4d4"/><path d="M1 13H12" stroke="#d4d4d4" stroke-width="1"/></svg><svg class="a" style="left:35px;top:236px;overflow:visible" width="3" height="3" viewBox="0 0 3 3"><path d="M3 0V3H0Z" fill="#d4d4d4"/></svg><svg class="a" style="left:5px;top:243px;overflow:visible" width="13" height="12" viewBox="0 0 13 12"><path d="M3 11C1.5 9 1 7.5 1 6.5C1 5.8 2 5.8 2.5 6.5L3 7.5V2.5C3 1.8 4 1.8 4.2 2.5V6V1.5C4.2.8 5.5.8 5.5 1.5V6V2C5.5 1.3 6.8 1.3 6.8 2V6.2V3C6.8 2.3 8 2.3 8 3V8C8 9.5 7.2 11 6.5 11Z" fill="#d4d4d4"/></svg><svg class="a" style="left:24px;top:242px;overflow:visible" width="13" height="13" viewBox="0 0 13 13"><circle cx="5" cy="5" r="3.7" fill="none" stroke="#d4d4d4" stroke-width="1.5"/><path d="M7.8 7.8L12 12" stroke="#d4d4d4" stroke-width="2"/></svg><div class="a" style="left:5px;top:264px;width:22px;height:21px;background:#3a7bd5;border:1px solid #2a2a2a"></div><div class="a" style="left:15px;top:273px;width:21px;height:21px;background:#fff;border:1px solid #2a2a2a"><div class="a" style="left:4px;top:4px;width:11px;height:11px;background:#1e1e1e"></div><div class="a" style="left:-3px;top:8.5px;width:25px;height:2px;background:#e0302a;transform:rotate(-45deg)"></div></div><svg class="a" style="left:28px;top:261px;overflow:visible" width="9" height="9" viewBox="0 0 9 9"><path d="M1 3H6Q8 3 8 6V8M6 1L8 3L6 5" fill="none" stroke="#d4d4d4" stroke-width="1"/></svg><div class="a" style="left:4px;top:287px;width:8px;height:8px;background:#2a2a2a"><div class="a" style="left:1px;top:1px;width:4px;height:4px;background:#fff"></div><div class="a" style="left:3px;top:3px;width:4px;height:4px;border:1px solid #c33"></div></div><div class="a" style="left:6px;top:298px;width:11px;height:11px;background:#2b2b2b"><div class="a" style="left:2px;top:2px;width:7px;height:7px;border:1px solid #ccc"></div></div><div class="t" style="left:24px;top:297px;font-size:12px;color:#ddd;font-weight:bold;font-family:'Liberation Serif', serif">T</div><div class="a" style="left:4px;top:315px;width:7px;height:8px;background:#3a7bd5"></div><div class="a" style="left:17px;top:315px;width:7px;height:8px;background:linear-gradient(90deg,#fff,#555)"></div><div class="a" style="left:27px;top:313px;width:11px;height:11px;background:#2b2b2b"><div class="a" style="left:2px;top:2px;width:7px;height:7px;background:#fff"></div><div class="a" style="left:0px;top:5px;width:11px;height:1.6px;background:#d22;transform:rotate(-45deg)"></div></div><div class="a" style="left:3px;top:330px;width:15px;height:15px;background:#2f2f2f;border-radius:2px"><div class="a" style="left:3px;top:3px;width:9px;height:8px;border:1px solid #ccc;background:#666"></div></div><div class="a" style="left:26px;top:333px;width:10px;height:10px;border:1px solid #bbb"></div><svg class="a" style="left:35px;top:343px;overflow:visible" width="3" height="3" viewBox="0 0 3 3"><path d="M3 0V3H0Z" fill="#d4d4d4"/></svg><div class="a" style="left:1446px;top:62px;width:474px;height:940px;background:#2f2f2f"></div><div class="a" style="left:1446px;top:62px;width:156px;height:9px;background:#2b2b2b"></div><div class="t" style="left:1590px;top:62px;font-size:6px;color:#bbb;letter-spacing:-1px">▸▸</div><div class="a" style="left:1604px;top:62px;width:156px;height:9px;background:#2b2b2b"></div><div class="t" style="left:1748px;top:62px;font-size:6px;color:#bbb;letter-spacing:-1px">▸▸</div><div class="a" style="left:1762px;top:62px;width:158px;height:9px;background:#2b2b2b"></div><div class="t" style="left:1908px;top:62px;font-size:6px;color:#bbb;letter-spacing:-1px">▸▸</div><div class="a" style="left:1446px;top:71px;width:156px;height:12px;background:#323232;border-bottom:1px solid #2a2a2a"></div><div class="a" style="left:1446px;top:71px;width:71px;height:12px;background:#474747"></div><svg class="a" style="left:1449px;top:74px;overflow:visible" width="5" height="7" viewBox="0 0 5 7"><path d="M0.5 2.8L2.5 0.5L4.5 2.8M0.5 4.2L2.5 6.5L4.5 4.2" fill="none" stroke="#ccc" stroke-width="0.9"/></svg><div class="t" style="left:1457px;top:73.5px;font-size:8.1px;color:#f0f0f0;font-weight:bold">Absatzformate</div><svg class="a" style="left:1588px;top:74px;overflow:visible" width="12" height="7" viewBox="0 0 12 7"><path d="M0.5 2.5H3.5L2 4.5Z" fill="#ddd"/><path d="M5 1H11M5 3.5H11M5 6H11" stroke="#999" stroke-width="1.2"/></svg><div class="a" style="left:1446px;top:83px;width:156px;height:811px;background:#474747"></div><div class="a" style="left:1593px;top:100px;width:9px;height:794px;background:#3e3e3e"></div><div class="t" style="left:1449px;top:87px;font-size:7.5px;color:#ddd">Basis</div><div class="t" style="left:1594px;top:85px;font-size:10px;color:#ddd">ϟ</div><div class="a" style="left:1446px;top:99px;width:147px;height:1px;background:#3a3a3a"></div><div class="t" style="left:1471px;top:104px;font-size:7.5px;color:#ddd">[Einf. Abs.]</div><div class="a" style="left:1446px;top:113px;width:147px;height:1px;background:#3e3e3e"></div><div class="t" style="left:1594px;top:104px;font-size:7px;color:#999">▴</div><div class="t" style="left:1594px;top:884px;font-size:7px;color:#999">▾</div><div class="a" style="left:1446px;top:893px;width:156px;height:15px;background:#404040;border-top:1px solid #333"></div><svg class="a" style="left:1452px;top:896px;overflow:visible" width="13" height="10" viewBox="0 0 13 10"><path d="M3 9H10Q12.5 9 12.5 6.5Q12.5 4 10 4Q9 1 6 1Q3 1 3 4Q0.5 4.5 0.5 6.5Q0.5 9 3 9Z" fill="none" stroke="#ddd" stroke-width="1.3"/><path d="M5 6H8" stroke="#ddd" stroke-width="1.3"/></svg><svg class="a" style="left:1528px;top:897px;overflow:visible" width="11" height="9" viewBox="0 0 11 9"><path d="M0.5 1.5H4L5 2.5H10.5V8.5H0.5Z" fill="#ccc"/></svg><svg class="a" style="left:1552px;top:896px;overflow:visible" width="9" height="10" viewBox="0 0 9 10"><path d="M0.5 0.5H8.5V9.5H3.5L0.5 6.5Z" fill="#ccc"/><path d="M1 6H4V9" fill="#777"/></svg><svg class="a" style="left:1573px;top:896px;overflow:visible" width="10" height="10" viewBox="0 0 10 10"><path d="M0.5 2H9.5M3.5 2V0.8H6.5V2M1.5 3H8.5L7.8 9.5H2.2Z" fill="none" stroke="#ccc" stroke-width="1.1"/></svg><div class="a" style="left:1446px;top:908px;width:156px;height:12px;background:#323232;border-bottom:1px solid #2a2a2a"></div><div class="a" style="left:1446px;top:908px;width:41px;height:12px;background:#474747"></div><svg class="a" style="left:1449px;top:911px;overflow:visible" width="5" height="7" viewBox="0 0 5 7"><path d="M0.5 2.8L2.5 0.5L4.5 2.8M0.5 4.2L2.5 6.5L4.5 4.2" fill="none" stroke="#ccc" stroke-width="0.9"/></svg><div class="t" style="left:1457px;top:910.5px;font-size:8.1px;color:#f0f0f0;font-weight:bold">Absatz</div><svg class="a" style="left:1588px;top:911px;overflow:visible" width="12" height="7" viewBox="0 0 12 7"><path d="M0.5 2.5H3.5L2 4.5Z" fill="#ddd"/><path d="M5 1H11M5 3.5H11M5 6H11" stroke="#999" stroke-width="1.2"/></svg><div class="a" style="left:1446px;top:921px;width:156px;height:81px;background:#474747"></div><div class="a" style="left:1450px;top:925px;width:14px;height:14px;background:#2b2b2b;border:1px solid #222"></div><svg class="a" style="left:1452px;top:927px;overflow:visible" width="11" height="11" viewBox="0 0 11 11"><path d="M0 1H10M0 4H7M0 7H10M0 10H7" stroke="#a8a8a8" stroke-width="1.6"/></svg><svg class="a" style="left:1467px;top:927px;overflow:visible" width="11" height="11" viewBox="0 0 11 11"><path d="M0 1H10M1.5 4H8.5M0 7H10M1.5 10H8.5" stroke="#a8a8a8" stroke-width="1.6"/></svg><svg class="a" style="left:1482px;top:927px;overflow:visible" width="11" height="11" viewBox="0 0 11 11"><path d="M0 1H10M3 4H10M0 7H10M3 10H10" stroke="#a8a8a8" stroke-width="1.6"/></svg><svg class="a" style="left:1504px;top:927px;overflow:visible" width="11" height="11" viewBox="0 0 11 11"><path d="M0 1H10M0 4H10M0 7H10M0 10H6" stroke="#a8a8a8" stroke-width="1.6"/></svg><svg class="a" style="left:1520px;top:927px;overflow:visible" width="11" height="11" viewBox="0 0 11 11"><path d="M0 1H10M0 4H10M0 7H10M2 10H8" stroke="#a8a8a8" stroke-width="1.6"/></svg><svg class="a" style="left:1535px;top:927px;overflow:visible" width="11" height="11" viewBox="0 0 11 11"><path d="M0 1H10M0 4H10M0 7H10M4 10H10" stroke="#a8a8a8" stroke-width="1.6"/></svg><svg class="a" style="left:1550px;top:927px;overflow:visible" width="11" height="11" viewBox="0 0 11 11"><path d="M0 1H10M0 4H10M0 7H10M0 10H10" stroke="#a8a8a8" stroke-width="1.6"/></svg><svg class="a" style="left:1571px;top:927px;overflow:visible" width="11" height="11" viewBox="0 0 11 11"><path d="M0 1H7M0 4H5M0 7H7M0 10H5M9.5 0V11" stroke="#a8a8a8" stroke-width="1.6"/></svg><svg class="a" style="left:1587px;top:927px;overflow:visible" width="11" height="11" viewBox="0 0 11 11"><path d="M0 1H7M0 4H5M0 7H7M0 10H5M9.5 0V11" stroke="#a8a8a8" stroke-width="1.6"/></svg><div class="t" style="left:1451px;top:949px;font-size:8px;color:#bbb">⇶</div><div class="a" style="left:1468px;top:949px;width:9px;height:11px;background:#333;border-radius:1px"><svg class="a" style="left:1px;top:1px" width="7" height="9"><path d="M1 3.5L3.5 0.5L6 3.5ZM1 5.5L3.5 8.5L6 5.5Z" fill="#d8d8d8"/></svg></div><div class="a" style="left:1478px;top:949px;width:43px;height:11px;background:#a6a6a6;border:1px solid #3a3a3a"><div class="t" style="left:2px;top:1px;font-size:7.5px;color:#1e1e1e">0 mm</div></div><div class="t" style="left:1528px;top:949px;font-size:8px;color:#bbb">⇶</div><div class="a" style="left:1545px;top:949px;width:9px;height:11px;background:#333;border-radius:1px"><svg class="a" style="left:1px;top:1px" width="7" height="9"><path d="M1 3.5L3.5 0.5L6 3.5ZM1 5.5L3.5 8.5L6 5.5Z" fill="#d8d8d8"/></svg></div><div class="a" style="left:1555px;top:949px;width:43px;height:11px;background:#a6a6a6;border:1px solid #3a3a3a"><div class="t" style="left:2px;top:1px;font-size:7.5px;color:#1e1e1e">0 mm</div></div><div class="t" style="left:1451px;top:965px;font-size:8px;color:#bbb">⇶</div><div class="a" style="left:1468px;top:965px;width:9px;height:11px;background:#333;border-radius:1px"><svg class="a" style="left:1px;top:1px" width="7" height="9"><path d="M1 3.5L3.5 0.5L6 3.5ZM1 5.5L3.5 8.5L6 5.5Z" fill="#d8d8d8"/></svg></div><div class="a" style="left:1478px;top:965px;width:43px;height:11px;background:#a6a6a6;border:1px solid #3a3a3a"><div class="t" style="left:2px;top:1px;font-size:7.5px;color:#1e1e1e">0 mm</div></div><div class="t" style="left:1528px;top:965px;font-size:8px;color:#bbb">⇶</div><div class="a" style="left:1545px;top:965px;width:9px;height:11px;background:#333;border-radius:1px"><svg class="a" style="left:1px;top:1px" width="7" height="9"><path d="M1 3.5L3.5 0.5L6 3.5ZM1 5.5L3.5 8.5L6 5.5Z" fill="#d8d8d8"/></svg></div><div class="a" style="left:1555px;top:965px;width:43px;height:11px;background:#a6a6a6;border:1px solid #3a3a3a"><div class="t" style="left:2px;top:1px;font-size:7.5px;color:#1e1e1e">0 mm</div></div><div class="t" style="left:1451px;top:985px;font-size:8px;color:#bbb">⇶</div><div class="a" style="left:1468px;top:985px;width:9px;height:11px;background:#333;border-radius:1px"><svg class="a" style="left:1px;top:1px" width="7" height="9"><path d="M1 3.5L3.5 0.5L6 3.5ZM1 5.5L3.5 8.5L6 5.5Z" fill="#d8d8d8"/></svg></div><div class="a" style="left:1478px;top:985px;width:43px;height:11px;background:#a6a6a6;border:1px solid #3a3a3a"><div class="t" style="left:2px;top:1px;font-size:7.5px;color:#1e1e1e">0 mm</div></div><div class="t" style="left:1528px;top:985px;font-size:8px;color:#bbb">⇶</div><div class="a" style="left:1545px;top:985px;width:9px;height:11px;background:#333;border-radius:1px"><svg class="a" style="left:1px;top:1px" width="7" height="9"><path d="M1 3.5L3.5 0.5L6 3.5ZM1 5.5L3.5 8.5L6 5.5Z" fill="#d8d8d8"/></svg></div><div class="a" style="left:1555px;top:985px;width:43px;height:11px;background:#a6a6a6;border:1px solid #3a3a3a"><div class="t" style="left:2px;top:1px;font-size:7.5px;color:#1e1e1e">0 mm</div></div><div class="t" style="left:1451px;top:1001px;font-size:8px;color:#bbb">⇶</div><div class="a" style="left:1468px;top:1001px;width:9px;height:11px;background:#333;border-radius:1px"><svg class="a" style="left:1px;top:1px" width="7" height="9"><path d="M1 3.5L3.5 0.5L6 3.5ZM1 5.5L3.5 8.5L6 5.5Z" fill="#d8d8d8"/></svg></div><div class="a" style="left:1478px;top:1001px;width:43px;height:11px;background:#a6a6a6;border:1px solid #3a3a3a"><div class="t" style="left:2px;top:1px;font-size:7.5px;color:#1e1e1e">0 mm</div></div><div class="t" style="left:1528px;top:1001px;font-size:8px;color:#bbb">⇶</div><div class="a" style="left:1545px;top:1001px;width:9px;height:11px;background:#333;border-radius:1px"><svg class="a" style="left:1px;top:1px" width="7" height="9"><path d="M1 3.5L3.5 0.5L6 3.5ZM1 5.5L3.5 8.5L6 5.5Z" fill="#d8d8d8"/></svg></div><div class="a" style="left:1555px;top:1001px;width:43px;height:11px;background:#a6a6a6;border:1px solid #3a3a3a"><div class="t" style="left:2px;top:1px;font-size:7.5px;color:#1e1e1e">0 mm</div></div><div class="a" style="left:1604px;top:71px;width:156px;height:12px;background:#323232;border-bottom:1px solid #2a2a2a"></div><div class="a" style="left:1604px;top:71px;width:43px;height:12px;background:#474747"></div><svg class="a" style="left:1607px;top:74px;overflow:visible" width="5" height="7" viewBox="0 0 5 7"><path d="M0.5 2.8L2.5 0.5L4.5 2.8M0.5 4.2L2.5 6.5L4.5 4.2" fill="none" stroke="#ccc" stroke-width="0.9"/></svg><div class="t" style="left:1615px;top:73.5px;font-size:8.1px;color:#f0f0f0;font-weight:bold">Verlauf</div><svg class="a" style="left:1746px;top:74px;overflow:visible" width="12" height="7" viewBox="0 0 12 7"><path d="M0.5 2.5H3.5L2 4.5Z" fill="#ddd"/><path d="M5 1H11M5 3.5H11M5 6H11" stroke="#999" stroke-width="1.2"/></svg><div class="a" style="left:1604px;top:83px;width:156px;height:919px;background:#474747"></div><div class="a" style="left:1608px;top:88px;width:22px;height:21px;background:linear-gradient(90deg,#fff,#222);border:1px solid #222"></div><div class="t" style="left:1657px;top:92px;font-size:7.5px;color:#ddd">Typ:</div><div class="a" style="left:1678px;top:90px;width:68px;height:10px;background:#4e4e4e;border:1px solid #333"></div><div class="t" style="left:1737px;top:90px;font-size:8px;color:#ddd">▾</div><div class="t" style="left:1646px;top:106px;font-size:7.5px;color:#ddd">Winkel:</div><div class="a" style="left:1673px;top:104px;width:21px;height:9px;background:#a5a5a5"></div><div class="t" style="left:1697px;top:104px;font-size:7px;color:#ddd">°</div><div class="a" style="left:1730px;top:159px;width:21px;height:8px;background:linear-gradient(90deg,#555,#000)"></div><div class="a" style="left:1604px;top:183px;width:156px;height:15px;background:#323232"></div><div class="t" style="left:1747px;top:185px;font-size:7px;color:#aaa;letter-spacing:-1px">▾≡</div><div class="a" style="left:1748px;top:200px;width:11px;height:22px;background:#3c3c3c"></div><div class="t" style="left:1733px;top:203px;font-size:9px;color:#ccc">▤</div><div class="a" style="left:1750px;top:120px;width:1px;height:60px;background:#3a3a3a"></div><div class="a" style="left:1762px;top:71px;width:158px;height:12px;background:#323232;border-bottom:1px solid #2a2a2a"></div><div class="a" style="left:1762px;top:71px;width:38px;height:12px;background:#474747"></div><svg class="a" style="left:1765px;top:74px;overflow:visible" width="5" height="7" viewBox="0 0 5 7"><path d="M0.5 2.8L2.5 0.5L4.5 2.8M0.5 4.2L2.5 6.5L4.5 4.2" fill="none" stroke="#ccc" stroke-width="0.9"/></svg><div class="t" style="left:1773px;top:73.5px;font-size:8.1px;color:#f0f0f0;font-weight:bold">Seiten</div><svg class="a" style="left:1906px;top:74px;overflow:visible" width="12" height="7" viewBox="0 0 12 7"><path d="M0.5 2.5H3.5L2 4.5Z" fill="#ddd"/><path d="M5 1H11M5 3.5H11M5 6H11" stroke="#999" stroke-width="1.2"/></svg><div class="t" style="left:1805px;top:73.5px;font-size:8px;color:#b0b0b0">Ebenen</div><div class="a" style="left:1762px;top:83px;width:158px;height:540px;background:#474747"></div><div class="a" style="left:1909px;top:83px;width:10px;height:540px;background:#3a3a3a"></div><div class="t" style="left:1765px;top:92px;font-size:7.5px;color:#ddd">[Ohne]</div><div class="a" style="left:1889px;top:86px;width:14px;height:18px;background:#fff;border:1px solid #666"></div><div class="t" style="left:1765px;top:114px;font-size:7.5px;color:#ddd">A-Seitenzahl</div><div class="a" style="left:1877px;top:108px;width:26px;height:18px;background:#f3f5fb;border:1px solid #777"><div class="a" style="left:4px;top:2px;width:1px;height:14px;background:#9fb6e0"></div><div class="a" style="left:12px;top:0;width:1.5px;height:16px;background:#9fb6e0"></div><div class="a" style="left:20px;top:2px;width:1px;height:14px;background:#9fb6e0"></div></div><div class="t" style="left:1765px;top:136px;font-size:7.5px;color:#ddd">B-Basis</div><div class="a" style="left:1877px;top:129px;width:26px;height:18px;background:#f3f5fb;border:1px solid #777"><div class="a" style="left:4px;top:2px;width:1px;height:14px;background:#9fb6e0"></div><div class="a" style="left:12px;top:0;width:1.5px;height:16px;background:#9fb6e0"></div><div class="a" style="left:20px;top:2px;width:1px;height:14px;background:#9fb6e0"></div><div class="t" style="left:1px;top:0;font-size:7px;color:#222;font-weight:bold">A</div><div class="t" style="left:18px;top:0;font-size:7px;color:#222;font-weight:bold">A</div></div><div class="t" style="left:1765px;top:157px;font-size:7.5px;color:#ddd">B1-Kapitelstartseite</div><div class="a" style="left:1877px;top:151px;width:26px;height:18px;background:#eef2fa;border:1px solid #777"><div class="a" style="left:4px;top:2px;width:1px;height:14px;background:#9fb6e0"></div><div class="a" style="left:12px;top:0;width:1.5px;height:16px;background:#9fb6e0"></div><div class="a" style="left:20px;top:2px;width:1px;height:14px;background:#9fb6e0"></div><svg class="a" style="left:1px;top:1px" width="10" height="15"><path d="M0 0L10 15M10 0L0 15" stroke="#9fb6e0"/></svg><div class="t" style="left:18px;top:0;font-size:7px;color:#222;font-weight:bold">B</div></div><div class="t" style="left:1910px;top:95px;font-size:7px;color:#999">▴</div><div class="t" style="left:1910px;top:178px;font-size:7px;color:#999">▾</div><div class="a" style="left:1762px;top:192px;width:147px;height:1px;background:#3a3a3a"></div><div class="a" style="left:1816.5px;top:202px;width:38.5px;height:27.5px;background:#b9c3cc;border:1px solid #5a5a5a"><div class="a" style="left:0;top:0;width:18px;height:19px;background:linear-gradient(#a9b8c4,#9aabb8)"></div><div class="a" style="left:0;top:19px;width:18px;height:7px;background:linear-gradient(#7d8a70,#5e6555)"></div><div class="a" style="left:21px;top:6px;width:9px;height:17px;background:repeating-linear-gradient(#2e3844 0 3px,#aab4bf 3px 5px)"></div><div class="a" style="left:31px;top:8px;width:5px;height:14px;background:#8c979f"></div><div class="t" style="left:0;top:0;font-size:7px;font-weight:bold;color:#111;background:#f4f4f4;padding:0 1px">B1</div><div class="t" style="left:25px;top:0;font-size:7px;font-weight:bold;color:#111;background:#f4f4f4;padding:0 1px">B1</div></div><div class="a" style="left:1826px;top:232px;width:17px;height:10px;background:#4a5670;border-radius:2px"></div><div class="t" style="left:1829px;top:233px;font-size:8px;color:#f0f0f0;font-weight:bold">2-3</div><div class="a" style="left:1817px;top:250px;width:38px;height:27px;background:#fff;border:1px solid #555"><div class="t" style="left:1px;top:0;font-size:6px;color:#333">B</div><div class="t" style="left:31px;top:0;font-size:6px;color:#333">B</div><div class="a" style="left:7px;top:2px;width:10px;height:23px;background:repeating-linear-gradient(#222 0 3px,#fff 3px 4px)"></div><div class="a" style="left:20px;top:2px;width:10px;height:23px;background:repeating-linear-gradient(#222 0 3px,#fff 3px 4px)"></div><div class="a" style="left:18px;top:0;width:1px;height:27px;background:#888"></div></div><div class="t" style="left:1828px;top:281px;font-size:8px;color:#ccc">4-5</div><div class="a" style="left:1817px;top:298px;width:38px;height:27px;background:#fff;border:1px solid #555"><div class="t" style="left:1px;top:0;font-size:6px;color:#333">B</div><div class="t" style="left:31px;top:0;font-size:6px;color:#333">B</div><div class="a" style="left:7px;top:2px;width:10px;height:23px;background:repeating-linear-gradient(#222 0 3px,#fff 3px 4px)"></div><div class="a" style="left:20px;top:2px;width:10px;height:2px;background:#333"></div><div class="a" style="left:18px;top:0;width:1px;height:27px;background:#888"></div></div><div class="t" style="left:1828px;top:329px;font-size:8px;color:#ccc">6-7</div><div class="t" style="left:1910px;top:195px;font-size:7px;color:#999">▴</div><div class="a" style="left:1762px;top:623px;width:158px;height:18px;background:#3e3e3e;border-top:1px solid #333"></div><div class="t" style="left:1764px;top:629px;font-size:7.5px;color:#ddd">6 Seiten auf 3 Druck...</div><svg class="a" style="left:1842px;top:627px;overflow:visible" width="14" height="11" viewBox="0 0 14 11"><rect x="3" y="0.5" width="6" height="6" fill="#ccc"/><rect x="0.5" y="4" width="9" height="6" fill="#ccc" stroke="#474747"/><circle cx="12" cy="9" r="1" fill="#ccc"/></svg><svg class="a" style="left:1868px;top:627px;overflow:visible" width="9" height="10" viewBox="0 0 9 10"><path d="M0.5 0.5H8.5V9.5H3.5L0.5 6.5Z" fill="#ccc"/><path d="M1 6H4V9" fill="#777"/></svg><svg class="a" style="left:1890px;top:627px;overflow:visible" width="10" height="10" viewBox="0 0 10 10"><path d="M0.5 2H9.5M3.5 2V0.8H6.5V2M1.5 3H8.5L7.8 9.5H2.2Z" fill="none" stroke="#ccc" stroke-width="1.1"/></svg><div class="a" style="left:1762px;top:641px;width:158px;height:12px;background:#323232;border-bottom:1px solid #2a2a2a"></div><div class="a" style="left:1762px;top:641px;width:41px;height:12px;background:#474747"></div><svg class="a" style="left:1765px;top:644px;overflow:visible" width="5" height="7" viewBox="0 0 5 7"><path d="M0.5 2.8L2.5 0.5L4.5 2.8M0.5 4.2L2.5 6.5L4.5 4.2" fill="none" stroke="#ccc" stroke-width="0.9"/></svg><div class="t" style="left:1773px;top:643.5px;font-size:8.1px;color:#f0f0f0;font-weight:bold">Kontur</div><svg class="a" style="left:1906px;top:644px;overflow:visible" width="12" height="7" viewBox="0 0 12 7"><path d="M0.5 2.5H3.5L2 4.5Z" fill="#ddd"/><path d="M5 1H11M5 3.5H11M5 6H11" stroke="#999" stroke-width="1.2"/></svg><div class="t" style="left:1807px;top:643.5px;font-size:8px;color:#b0b0b0">Farbe</div><div class="a" style="left:1762px;top:654px;width:158px;height:182px;background:#474747"></div><div class="t" style="left:1679px;top:663px;width:150px;text-align:right;font-size:7.5px;color:#ddd">Stärke:</div><div class="a" style="left:1833px;top:662px;width:9px;height:11px;background:#333;border-radius:1px"><svg class="a" style="left:1px;top:1px" width="7" height="9"><path d="M1 3.5L3.5 0.5L6 3.5ZM1 5.5L3.5 8.5L6 5.5Z" fill="#d8d8d8"/></svg></div><div class="a" style="left:1843px;top:662px;width:31px;height:10px;background:#a4a4a4;border:1px solid #3a3a3a"><div class="t" style="left:2px;top:1px;font-size:7.5px;color:#222">0 Pt</div></div><div class="a" style="left:1874px;top:662px;width:11px;height:10px;background:#5a5a5a"><div class="t" style="left:2px;top:1px;font-size:7px;color:#eee">▾</div></div><div class="t" style="left:1679px;top:681px;width:150px;text-align:right;font-size:7.5px;color:#ddd">Gehrungsgrenze:</div><div class="a" style="left:1833px;top:680px;width:9px;height:11px;background:#333;border-radius:1px"><svg class="a" style="left:1px;top:1px" width="7" height="9"><path d="M1 3.5L3.5 0.5L6 3.5ZM1 5.5L3.5 8.5L6 5.5Z" fill="#d8d8d8"/></svg></div><div class="a" style="left:1843px;top:680px;width:30px;height:10px;background:#a4a4a4;border:1px solid #3a3a3a"><div class="t" style="left:2px;top:1px;font-size:7.5px;color:#555">4</div></div><div class="t" style="left:1877px;top:682px;font-size:7px;color:#ddd">x</div><div class="t" style="left:1679px;top:697px;width:150px;text-align:right;font-size:7.5px;color:#ddd">Abschluss:</div><div class="a" style="left:1833px;top:695px;width:11px;height:12px;background:#2e2e2e"></div><svg class="a" style="left:1834px;top:696px;overflow:visible" width="10" height="10" viewBox="0 0 10 10"><path d="M3 2H9V8H3" fill="none" stroke="#ddd" stroke-width="2"/><circle cx="3.5" cy="5" r="1" fill="#111"/></svg><svg class="a" style="left:1847px;top:696px;overflow:visible" width="10" height="10" viewBox="0 0 10 10"><path d="M9 2H4Q1 2 1 5Q1 8 4 8H9" fill="none" stroke="#ddd" stroke-width="2.2"/><circle cx="4.5" cy="5" r="1" fill="#111"/></svg><svg class="a" style="left:1859px;top:696px;overflow:visible" width="10" height="10" viewBox="0 0 10 10"><path d="M9 1.5H1.5V8.5H9" fill="none" stroke="#ddd" stroke-width="2.2"/><path d="M4 3.5L7 5L4 6.5Z" fill="#111"/></svg><div class="t" style="left:1679px;top:715px;width:150px;text-align:right;font-size:7.5px;color:#ddd">Ecke:</div><div class="a" style="left:1833px;top:713px;width:11px;height:12px;background:#2e2e2e"></div><svg class="a" style="left:1834px;top:714px;overflow:visible" width="10" height="10" viewBox="0 0 10 10"><path d="M1 9V1H9V5H5V9Z" fill="#ddd"/><circle cx="4" cy="4" r="1" fill="#111"/></svg><svg class="a" style="left:1847px;top:714px;overflow:visible" width="10" height="10" viewBox="0 0 10 10"><path d="M1 9V4Q1 1 4 1H9V5H5V9Z" fill="#ddd"/><circle cx="4" cy="4" r="1" fill="#111"/></svg><svg class="a" style="left:1859px;top:714px;overflow:visible" width="10" height="10" viewBox="0 0 10 10"><path d="M1 9V4L4 1H9V5H5V9Z" fill="#ddd"/><circle cx="4" cy="4" r="1" fill="#111"/></svg><div class="t" style="left:1679px;top:737px;width:150px;text-align:right;font-size:7.5px;color:#ddd">Kontur ausrichten:</div><svg class="a" style="left:1834px;top:736px;overflow:visible" width="10" height="10" viewBox="0 0 10 10"><path d="M2 1V8H9" fill="none" stroke="#8a8a8a" stroke-width="1.5"/><path d="M4 1V6H9" fill="none" stroke="#666" stroke-width="1"/></svg><svg class="a" style="left:1847px;top:736px;overflow:visible" width="10" height="10" viewBox="0 0 10 10"><path d="M2 1V8H9" fill="none" stroke="#8a8a8a" stroke-width="1.5"/><path d="M4 1V6H9" fill="none" stroke="#666" stroke-width="1"/></svg><svg class="a" style="left:1859px;top:736px;overflow:visible" width="10" height="10" viewBox="0 0 10 10"><path d="M2 1V8H9" fill="none" stroke="#8a8a8a" stroke-width="1.5"/><path d="M4 1V6H9" fill="none" stroke="#666" stroke-width="1"/></svg><div class="a" style="left:1762px;top:751px;width:147px;height:1px;background:#3e3e3e"></div><div class="t" style="left:1679px;top:759px;width:150px;text-align:right;font-size:7.5px;color:#ddd">Typ:</div><div class="a" style="left:1833px;top:758px;width:69px;height:11px;background:#a0a0a0;border:1px solid #333"><div class="a" style="left:2px;top:2px;width:62px;height:5px;background:#000"></div></div><div class="a" style="left:1904px;top:758px;width:11px;height:11px;background:#5a5a5a"><div class="t" style="left:2px;top:2px;font-size:7px;color:#eee">▾</div></div><div class="t" style="left:1679px;top:774px;width:150px;text-align:right;font-size:7.5px;color:#ddd">Anfang:</div><div class="a" style="left:1833px;top:773px;width:69px;height:11px;background:#a4a4a4;border:1px solid #3a3a3a"><div class="t" style="left:2px;top:1px;font-size:7.5px;color:#222">Ohne</div></div><div class="a" style="left:1904px;top:773px;width:11px;height:11px;background:#5a5a5a"><div class="t" style="left:2px;top:2px;font-size:7px;color:#eee">▾</div></div><div class="t" style="left:1679px;top:789px;width:150px;text-align:right;font-size:7.5px;color:#ddd">Ende:</div><div class="a" style="left:1833px;top:788px;width:69px;height:11px;background:#a4a4a4;border:1px solid #3a3a3a"><div class="t" style="left:2px;top:1px;font-size:7.5px;color:#222">Ohne</div></div><div class="a" style="left:1904px;top:788px;width:11px;height:11px;background:#5a5a5a"><div class="t" style="left:2px;top:2px;font-size:7px;color:#eee">▾</div></div><div class="t" style="left:1679px;top:804px;width:150px;text-align:right;font-size:7.5px;color:#ddd">Farbe für Lücke:</div><div class="a" style="left:1833px;top:803px;width:69px;height:11px;background:#8d8d8d;border:1px solid #3a3a3a"><div class="t" style="left:2px;top:1px;font-size:7.5px;color:#666">&nbsp;&nbsp;&nbsp;[Ohne]</div></div><div class="a" style="left:1835px;top:805px;width:8px;height:8px;background:#fff"><div class="a" style="left:-1px;top:3px;width:10px;height:1.5px;background:#d22;transform:rotate(-45deg)"></div></div><div class="a" style="left:1904px;top:803px;width:11px;height:11px;background:#555"><div class="t" style="left:2px;top:2px;font-size:7px;color:#888">▾</div></div><div class="t" style="left:1679px;top:819px;width:150px;text-align:right;font-size:7.5px;color:#ddd">Farbton für Lücke:</div><div class="a" style="left:1833px;top:818px;width:22px;height:10px;background:#909090;border:1px solid #3a3a3a"><div class="t" style="left:2px;top:1px;font-size:7.5px;color:#444">100 %</div></div><div class="t" style="left:1861px;top:819px;font-size:8px;color:#999">›</div><div class="a" style="left:1762px;top:835px;width:158px;height:12px;background:#323232;border-bottom:1px solid #2a2a2a"></div><div class="a" style="left:1762px;top:835px;width:54px;height:12px;background:#474747"></div><svg class="a" style="left:1765px;top:838px;overflow:visible" width="5" height="7" viewBox="0 0 5 7"><path d="M0.5 2.8L2.5 0.5L4.5 2.8M0.5 4.2L2.5 6.5L4.5 4.2" fill="none" stroke="#ccc" stroke-width="0.9"/></svg><div class="t" style="left:1773px;top:837.5px;font-size:8.1px;color:#f0f0f0;font-weight:bold">Farbfelder</div><svg class="a" style="left:1906px;top:838px;overflow:visible" width="12" height="7" viewBox="0 0 12 7"><path d="M0.5 2.5H3.5L2 4.5Z" fill="#ddd"/><path d="M5 1H11M5 3.5H11M5 6H11" stroke="#999" stroke-width="1.2"/></svg><div class="a" style="left:1762px;top:848px;width:158px;height:154px;background:#474747"></div><div class="a" style="left:1766px;top:850px;width:9px;height:9px;background:#3a7bd5"></div><div class="a" style="left:1772px;top:856px;width:9px;height:9px;background:#c22;border:1.5px solid #fff"></div><div class="a" style="left:1791px;top:854px;width:10px;height:10px;border:1px solid #ccc;background:#333"></div><div class="t" style="left:1803px;top:852px;font-size:11px;color:#ddd;font-family:'Liberation Serif', serif">T</div><div class="t" style="left:1831px;top:854px;font-size:7.5px;color:#bbb">Farbton:</div><div class="a" style="left:1862px;top:853px;width:18px;height:9px;background:#a5a5a5"></div><div class="t" style="left:1886px;top:853px;font-size:8px;color:#bbb">›</div><div class="t" style="left:1896px;top:854px;font-size:7.5px;color:#ddd">%</div><div class="a" style="left:1909px;top:868px;width:10px;height:134px;background:#3a3a3a"></div><div class="a" style="left:1762px;top:868px;width:147px;height:15px;background:#4a5a70;border-bottom:1px solid #3c3c3c"></div><div class="a" style="left:1773px;top:871px;width:9px;height:9px;background:#fff"><div class="a" style="left:-1px;top:3px;width:11px;height:2px;background:#d22;transform:rotate(-45deg)"></div></div><div class="t" style="left:1784px;top:872px;font-size:7.5px;color:#fff;font-weight:bold">[Ohne]</div><svg class="a" style="left:1873px;top:871px;overflow:visible" width="10" height="9" viewBox="0 0 10 9"><path d="M1 1L9 8M9 1L1 8" stroke="#ddd" stroke-width="1.2"/><circle cx="8.5" cy="1.5" r="1.3" fill="#ddd"/></svg><div class="a" style="left:1897px;top:871px;width:9px;height:9px;background:#fff"><div class="a" style="left:-1px;top:3px;width:11px;height:2px;background:#d22;transform:rotate(-45deg)"></div></div><div class="a" style="left:1762px;top:883px;width:147px;height:15px;background:#474747;border-bottom:1px solid #3c3c3c"></div><div class="a" style="left:1773px;top:886px;width:9px;height:9px;background:#000;border:1px solid #222"></div><div class="t" style="left:1784px;top:887px;font-size:7.5px;color:#ddd">[Passermarken]</div><svg class="a" style="left:1873px;top:886px;overflow:visible" width="10" height="9" viewBox="0 0 10 9"><path d="M1 1L9 8M9 1L1 8" stroke="#ddd" stroke-width="1.2"/><circle cx="8.5" cy="1.5" r="1.3" fill="#ddd"/></svg><div class="a" style="left:1897px;top:886px;width:9px;height:9px;background:#888;border:1px solid #ccc;border-radius:1px"></div><div class="a" style="left:1762px;top:898px;width:147px;height:15px;background:#474747;border-bottom:1px solid #3c3c3c"></div><div class="a" style="left:1773px;top:901px;width:9px;height:9px;background:#fff;border:1px solid #222"></div><div class="t" style="left:1784px;top:902px;font-size:7.5px;color:#ddd">[Papier]</div><div class="a" style="left:1762px;top:913px;width:147px;height:15px;background:#474747;border-bottom:1px solid #3c3c3c"></div><div class="a" style="left:1773px;top:916px;width:9px;height:9px;background:#000;border:1px solid #222"></div><div class="t" style="left:1784px;top:917px;font-size:7.5px;color:#ddd">[Schwarz]</div><svg class="a" style="left:1873px;top:916px;overflow:visible" width="10" height="9" viewBox="0 0 10 9"><path d="M1 1L9 8M9 1L1 8" stroke="#ddd" stroke-width="1.2"/><circle cx="8.5" cy="1.5" r="1.3" fill="#ddd"/></svg><div class="a" style="left:1885px;top:916px;width:9px;height:9px;background:#6e6e6e;border:1px solid #9a9a9a"></div><div class="a" style="left:1897px;top:916px;width:9px;height:9px;background:conic-gradient(from 45deg,#f0f 0 25%,#ff0 0 50%,#0cf 0 75%,#000 0 100%);border:1px solid #ddd"></div><div class="a" style="left:1762px;top:928px;width:147px;height:15px;background:#474747;border-bottom:1px solid #3c3c3c"></div><div class="a" style="left:1773px;top:931px;width:9px;height:9px;background:#3d76d1;border:1px solid #222"></div><div class="t" style="left:1784px;top:932px;font-size:7.5px;color:#ddd">C=80 M=50 Y=0 K=0</div><div class="a" style="left:1885px;top:931px;width:9px;height:9px;background:#6e6e6e;border:1px solid #9a9a9a"></div><div class="a" style="left:1897px;top:931px;width:9px;height:9px;background:conic-gradient(from 45deg,#f0f 0 25%,#ff0 0 50%,#0cf 0 75%,#000 0 100%);border:1px solid #ddd"></div><div class="a" style="left:1762px;top:943px;width:147px;height:15px;background:#474747;border-bottom:1px solid #3c3c3c"></div><div class="a" style="left:1773px;top:946px;width:9px;height:9px;background:#17a0e8;border:1px solid #222"></div><div class="t" style="left:1784px;top:947px;font-size:7.5px;color:#ddd">C=100 M=0 Y=0 K=0</div><div class="a" style="left:1885px;top:946px;width:9px;height:9px;background:#6e6e6e;border:1px solid #9a9a9a"></div><div class="a" style="left:1897px;top:946px;width:9px;height:9px;background:conic-gradient(from 45deg,#f0f 0 25%,#ff0 0 50%,#0cf 0 75%,#000 0 100%);border:1px solid #ddd"></div><div class="a" style="left:1750px;top:222px;width:10px;height:780px;background:#383838"></div><div class="a" style="left:1593px;top:894px;width:9px;height:0px;"></div><div class="a" style="left:1107px;top:107.5px;width:636px;height:487.5px;background:transparent;box-shadow:0 8px 22px 6px rgba(0,0,0,.28);border-radius:6px;left:1121px;top:113.5px;width:608px;height:463.5px"></div><div class="a" style="left:1121px;top:113.5px;width:608px;height:17px;background:linear-gradient(#ececec,#dadada);border-radius:4px 4px 0 0;border-bottom:1px solid #b8b8b8"></div><div class="t" style="left:1121px;top:117.5px;width:608px;text-align:center;font-size:10.3px;color:#3a3a3a;padding-left:4px">Absatzformatoptionen</div><div class="a" style="left:1121px;top:130.5px;width:608px;height:446.5px;background:#4a4a4a"></div><div class="a" style="left:1130px;top:141px;width:169px;height:361px;background:#474747;border:1px solid #333"></div><div class="a" style="left:1288px;top:142px;width:10px;height:359px;background:#3e3e3e;border-left:1px solid #383838"></div><div class="t" style="left:1290px;top:144px;font-size:7px;color:#888">▴</div><div class="t" style="left:1290px;top:491px;font-size:7px;color:#888">▾</div><div class="a" style="left:1131px;top:141.7px;width:157px;height:12px;background:#474747;border-bottom:1px solid #3e3e3e"></div><div class="t" style="left:1134.5px;top:144.7px;font-size:7.1px;color:#e0e0e0;-webkit-text-stroke:0.15px #ddd">Allgemein</div><div class="a" style="left:1131px;top:153.7px;width:157px;height:12px;background:#474747;border-bottom:1px solid #3e3e3e"></div><div class="t" style="left:1134.5px;top:156.7px;font-size:7.1px;color:#e0e0e0;-webkit-text-stroke:0.15px #ddd">Grundlegende Zeichenformate</div><div class="a" style="left:1131px;top:165.7px;width:157px;height:12px;background:#474747;border-bottom:1px solid #3e3e3e"></div><div class="t" style="left:1134.5px;top:168.7px;font-size:7.1px;color:#e0e0e0;-webkit-text-stroke:0.15px #ddd">Erweiterte Zeichenformate</div><div class="a" style="left:1131px;top:177.7px;width:157px;height:12px;background:#474747;border-bottom:1px solid #3e3e3e"></div><div class="t" style="left:1134.5px;top:180.7px;font-size:7.1px;color:#e0e0e0;-webkit-text-stroke:0.15px #ddd">Einzüge und Abstände</div><div class="a" style="left:1131px;top:189.7px;width:157px;height:12px;background:#474747;border-bottom:1px solid #3e3e3e"></div><div class="t" style="left:1134.5px;top:192.7px;font-size:7.1px;color:#e0e0e0;-webkit-text-stroke:0.15px #ddd">Tabulatoren</div><div class="a" style="left:1131px;top:201.7px;width:157px;height:12px;background:#474747;border-bottom:1px solid #3e3e3e"></div><div class="t" style="left:1134.5px;top:204.7px;font-size:7.1px;color:#e0e0e0;-webkit-text-stroke:0.15px #ddd">Absatzlinien</div><div class="a" style="left:1131px;top:213.7px;width:157px;height:12px;background:#474747;border-bottom:1px solid #3e3e3e"></div><div class="t" style="left:1134.5px;top:216.7px;font-size:7.1px;color:#e0e0e0;-webkit-text-stroke:0.15px #ddd">Absatzschattierung</div><div class="a" style="left:1131px;top:225.7px;width:157px;height:12px;background:#474747;border-bottom:1px solid #3e3e3e"></div><div class="t" style="left:1134.5px;top:228.7px;font-size:7.1px;color:#e0e0e0;-webkit-text-stroke:0.15px #ddd">Umbruchoptionen</div><div class="a" style="left:1131px;top:237.7px;width:157px;height:12px;background:#474747;border-bottom:1px solid #3e3e3e"></div><div class="t" style="left:1134.5px;top:240.7px;font-size:7.1px;color:#e0e0e0;-webkit-text-stroke:0.15px #ddd">Silbentrennung</div><div class="a" style="left:1131px;top:249.7px;width:157px;height:12px;background:#474747;border-bottom:1px solid #3e3e3e"></div><div class="t" style="left:1134.5px;top:252.7px;font-size:7.1px;color:#e0e0e0;-webkit-text-stroke:0.15px #ddd">Abstände</div><div class="a" style="left:1131px;top:261.7px;width:157px;height:12px;background:#474747;border-bottom:1px solid #3e3e3e"></div><div class="t" style="left:1134.5px;top:264.7px;font-size:7.1px;color:#e0e0e0;-webkit-text-stroke:0.15px #ddd">Spaltenspanne</div><div class="a" style="left:1131px;top:273.7px;width:157px;height:12px;background:#474747;border-bottom:1px solid #3e3e3e"></div><div class="t" style="left:1134.5px;top:276.7px;font-size:7.1px;color:#e0e0e0;-webkit-text-stroke:0.15px #ddd">Initialen und verschachtelte Formate</div><div class="a" style="left:1131px;top:285.7px;width:157px;height:12px;background:#4a5a70;border-bottom:1px solid #3e3e3e"></div><div class="t" style="left:1134.5px;top:288.7px;font-size:7.1px;color:#fff;-webkit-text-stroke:0.15px #ddd">GREP-Stil</div><div class="a" style="left:1131px;top:297.7px;width:157px;height:12px;background:#474747;border-bottom:1px solid #3e3e3e"></div><div class="t" style="left:1134.5px;top:300.7px;font-size:7.1px;color:#e0e0e0;-webkit-text-stroke:0.15px #ddd">Aufzählungszeichen und Nummerierung</div><div class="a" style="left:1131px;top:309.7px;width:157px;height:12px;background:#474747;border-bottom:1px solid #3e3e3e"></div><div class="t" style="left:1134.5px;top:312.7px;font-size:7.1px;color:#e0e0e0;-webkit-text-stroke:0.15px #ddd">Zeichenfarbe</div><div class="a" style="left:1131px;top:321.7px;width:157px;height:12px;background:#474747;border-bottom:1px solid #3e3e3e"></div><div class="t" style="left:1134.5px;top:324.7px;font-size:7.1px;color:#e0e0e0;-webkit-text-stroke:0.15px #ddd">OpenType-Funktionen</div><div class="a" style="left:1131px;top:333.7px;width:157px;height:12px;background:#474747;border-bottom:1px solid #3e3e3e"></div><div class="t" style="left:1134.5px;top:336.7px;font-size:7.1px;color:#e0e0e0;-webkit-text-stroke:0.15px #ddd">Unterstreichungsoptionen</div><div class="a" style="left:1131px;top:345.7px;width:157px;height:12px;background:#474747;border-bottom:1px solid #3e3e3e"></div><div class="t" style="left:1134.5px;top:348.7px;font-size:7.1px;color:#e0e0e0;-webkit-text-stroke:0.15px #ddd">Durchstreichungsoptionen</div><div class="a" style="left:1131px;top:357.7px;width:157px;height:12px;background:#474747;border-bottom:1px solid #3e3e3e"></div><div class="t" style="left:1134.5px;top:360.7px;font-size:7.1px;color:#e0e0e0;-webkit-text-stroke:0.15px #ddd">Tagsexport</div><div class="t" style="left:1288px;top:145px;width:150px;text-align:right;font-size:9.4px;color:#e6e6e6">Formatname:</div><div class="a" style="left:1444px;top:143.5px;width:188px;height:12.5px;background:#a8a8a8;border:1px solid #333"><div class="t" style="left:1px;top:1.5px;font-size:10px;color:#111;-webkit-text-stroke:0.3px #111">Basis</div></div><div class="t" style="left:1288px;top:164px;width:150px;text-align:right;font-size:6.5px;color:#ccc">Position:</div><div class="t" style="left:1306px;top:177.5px;font-size:9.5px;color:#e6e6e6;-webkit-text-stroke:0.2px #e6e6e6">GREP-Stil</div><div class="a" style="left:1306px;top:198px;width:387px;height:207px;background:#474747;border:1px solid #333"></div><div class="a" style="left:1307px;top:199.5px;width:385px;height:34px;background:#4b5a6d"></div><div class="t" style="left:1325px;top:203.5px;font-size:9px;color:#fff;font-weight:bold">Format anwenden: Bold-Versalien</div><div class="t" style="left:1255px;top:220px;width:150px;text-align:right;font-size:9px;color:#fff;font-weight:bold">Auf Text:</div><div class="a" style="left:1408px;top:217px;width:149px;height:15px;background:#a9a9a9;border:1.5px solid #a57a45"><div class="a" style="left:2px;top:1px;width:21px;height:11px;background:#9cc0ee"></div><div class="t" style="left:2px;top:2px;font-size:9.5px;color:#111">(\d+)</div></div><div class="a" style="left:1558px;top:217px;width:16px;height:15px;background:#3e4a58"></div><div class="t" style="left:1560px;top:218px;font-size:11px;color:#ddd">@</div><div class="a" style="left:1306px;top:410px;width:84px;height:14px;background:linear-gradient(#626262,#575757);border:1px solid #2e2e2e;border-radius:1px"><div class="t" style="left:0;top:1.5px;width:82px;text-align:center;font-size:9px;color:#eaeaea;-webkit-text-stroke:0.2px #eaeaea">Neuer GREP-Stil</div></div><div class="a" style="left:1399px;top:410px;width:66px;height:14px;background:linear-gradient(#626262,#575757);border:1px solid #2e2e2e;border-radius:1px"><div class="t" style="left:0;top:1.5px;width:64px;text-align:center;font-size:9px;color:#eaeaea;-webkit-text-stroke:0.2px #eaeaea">Löschen</div></div><svg class="a" style="left:1134px;top:549px;overflow:visible" width="9" height="9" viewBox="0 0 9 9"><path d="M1 4.5L3.5 7.5L8 1" fill="none" stroke="#eee" stroke-width="1.6"/></svg><div class="t" style="left:1145px;top:550.5px;font-size:9.5px;color:#eee;-webkit-text-stroke:0.25px #eee">Vorschau</div><div class="a" style="left:1569px;top:548px;width:69px;height:14px;background:linear-gradient(#626262,#575757);border:1px solid #2e2e2e;border-radius:1px"><div class="t" style="left:0;top:1.5px;width:67px;text-align:center;font-size:9px;color:#eaeaea;-webkit-text-stroke:0.2px #eaeaea">Abbrechen</div></div><div class="a" style="left:1647px;top:548px;width:71px;height:14px;background:linear-gradient(#626262,#575757);border:1px solid #2e2e2e;border-radius:1px"><div class="t" style="left:0;top:1.5px;width:69px;text-align:center;font-size:9px;color:#eaeaea;-webkit-text-stroke:0.2px #eaeaea">OK</div></div><div class="a" style="left:1646px;top:547px;width:73px;height:16px;border:1px solid #1e1e1e;border-radius:2px"></div><div class="a" style="left:1573px;top:221px;width:198px;height:284.5px;background:#cdcdcd;border-radius:4px;box-shadow:0 3px 10px rgba(0,0,0,.4);border:1px solid rgba(0,0,0,.4)"></div><div class="t" style="left:1589px;top:225.55px;font-size:10.9px;color:#111;-webkit-text-stroke:0.3px #111">Tabstopp</div><div class="t" style="left:1589px;top:239.82px;font-size:10.9px;color:#111;-webkit-text-stroke:0.3px #111">Harter Zeilenumbruch</div><div class="t" style="left:1589px;top:254.09px;font-size:10.9px;color:#111;-webkit-text-stroke:0.3px #111">Absatzende</div><div class="a" style="left:1574px;top:270.54px;width:196px;height:1px;background:#b9b9b9"></div><div class="t" style="left:1589px;top:277.46px;font-size:10.9px;color:#111;-webkit-text-stroke:0.3px #111">Symbole</div><div class="t" style="left:1754px;top:278.31px;font-size:9px;color:#111">▶</div><div class="t" style="left:1589px;top:291.73px;font-size:10.9px;color:#111;-webkit-text-stroke:0.3px #111">Marken</div><div class="t" style="left:1754px;top:292.58px;font-size:9px;color:#111">▶</div><div class="t" style="left:1589px;top:306.0px;font-size:10.9px;color:#111;-webkit-text-stroke:0.3px #111">Trenn- und Gedankenstriche</div><div class="t" style="left:1754px;top:306.85px;font-size:9px;color:#111">▶</div><div class="t" style="left:1589px;top:320.27px;font-size:10.9px;color:#111;-webkit-text-stroke:0.3px #111">Leerraum</div><div class="t" style="left:1754px;top:321.12px;font-size:9px;color:#111">▶</div><div class="a" style="left:1574px;top:336.72px;width:196px;height:1px;background:#b9b9b9"></div><div class="t" style="left:1589px;top:343.64px;font-size:10.9px;color:#111;-webkit-text-stroke:0.3px #111">Anführungszeichen</div><div class="t" style="left:1754px;top:344.49px;font-size:9px;color:#111">▶</div><div class="t" style="left:1589px;top:357.91px;font-size:10.9px;color:#111;-webkit-text-stroke:0.3px #111">Umbruchzeichen</div><div class="t" style="left:1754px;top:358.76px;font-size:9px;color:#111">▶</div><div class="t" style="left:1589px;top:372.18px;font-size:10.9px;color:#111;-webkit-text-stroke:0.3px #111">Variable</div><div class="t" style="left:1754px;top:373.03px;font-size:9px;color:#111">▶</div><div class="t" style="left:1589px;top:386.45px;font-size:10.9px;color:#111;-webkit-text-stroke:0.3px #111">Andere</div><div class="t" style="left:1754px;top:387.3px;font-size:9px;color:#111">▶</div><div class="a" style="left:1574px;top:402.9px;width:196px;height:1px;background:#b9b9b9"></div><div class="a" style="left:1573px;top:408.17px;width:198px;height:13.6px;background:#1a66e0"></div><div class="t" style="left:1589px;top:409.82px;font-size:10.9px;color:#fff;-webkit-text-stroke:0.3px #fff">Platzhalter</div><div class="t" style="left:1754px;top:410.67px;font-size:9px;color:#fff">▶</div><div class="t" style="left:1589px;top:424.09px;font-size:10.9px;color:#111;-webkit-text-stroke:0.3px #111">Positionen</div><div class="t" style="left:1754px;top:424.94px;font-size:9px;color:#111">▶</div><div class="t" style="left:1589px;top:438.36px;font-size:10.9px;color:#111;-webkit-text-stroke:0.3px #111">Wiederholung</div><div class="t" style="left:1754px;top:439.21px;font-size:9px;color:#111">▶</div><div class="t" style="left:1589px;top:452.63px;font-size:10.9px;color:#111;-webkit-text-stroke:0.3px #111">Entsprechung</div><div class="t" style="left:1754px;top:453.48px;font-size:9px;color:#111">▶</div><div class="a" style="left:1574px;top:469.08px;width:196px;height:1px;background:#b9b9b9"></div><div class="t" style="left:1589px;top:476.0px;font-size:10.9px;color:#111;-webkit-text-stroke:0.3px #111">Modifizierer</div><div class="t" style="left:1754px;top:476.85px;font-size:9px;color:#111">▶</div><div class="t" style="left:1589px;top:490.27px;font-size:10.9px;color:#111;-webkit-text-stroke:0.3px #111">Posix</div><div class="t" style="left:1754px;top:491.12px;font-size:9px;color:#111">▶</div><div class="a" style="left:1771px;top:405.5px;width:133px;height:105px;background:#cdcdcd;border-radius:4px;box-shadow:0 3px 10px rgba(0,0,0,.4);border:1px solid rgba(0,0,0,.4)"></div><div class="t" style="left:1787px;top:409.85px;font-size:10.9px;color:#111;-webkit-text-stroke:0.3px #111">Beliebige Ziffer</div><div class="t" style="left:1787px;top:424.13px;font-size:10.9px;color:#111;-webkit-text-stroke:0.3px #111">Beliebiger Buchstabe</div><div class="t" style="left:1787px;top:438.41px;font-size:10.9px;color:#111;-webkit-text-stroke:0.3px #111">Beliebiges Zeichen</div><div class="t" style="left:1787px;top:452.69px;font-size:10.9px;color:#111;-webkit-text-stroke:0.3px #111">Alle Leerräume</div><div class="t" style="left:1787px;top:466.97px;font-size:10.9px;color:#111;-webkit-text-stroke:0.3px #111">Alle Wortzeichen</div><div class="t" style="left:1787px;top:481.25px;font-size:10.9px;color:#111;-webkit-text-stroke:0.3px #111">Alle Großbuchstaben</div><div class="t" style="left:1787px;top:495.53px;font-size:10.9px;color:#111;-webkit-text-stroke:0.3px #111">Alle Kleinbuchstaben</div><div class="a" style="left:1918px;top:62px;width:2px;height:940px;background:#505050"></div><div class="a" style="left:1918px;top:0px;width:2px;height:62px;background:#262626"></div></body></html>
